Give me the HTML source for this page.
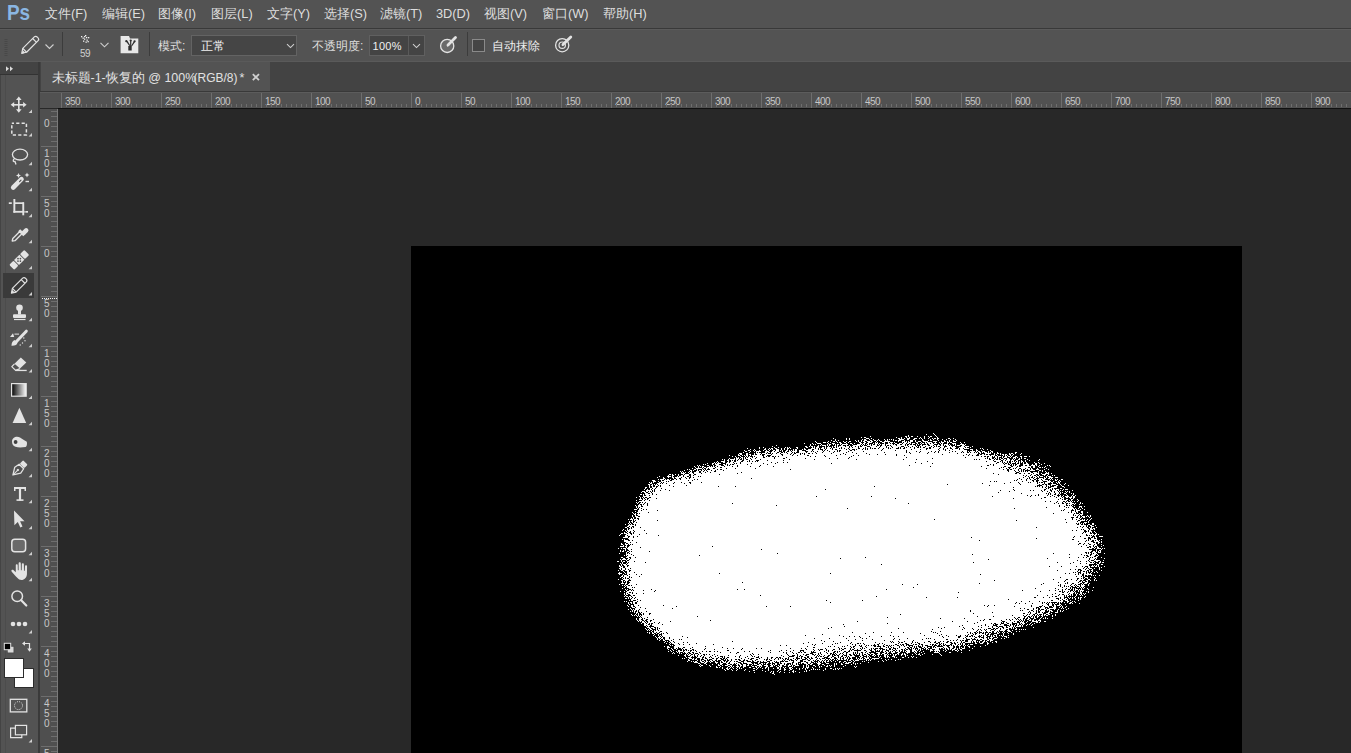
<!DOCTYPE html><html><head><meta charset="utf-8"><style>
*{box-sizing:border-box}
html,body{margin:0;padding:0;width:1351px;height:753px;overflow:hidden;background:#282828;font-family:"Liberation Sans",sans-serif}
.a{position:absolute}
.t{position:absolute;white-space:nowrap;font-size:12px;line-height:14px;color:#dedede}
.r{position:absolute;white-space:nowrap;font-size:10px;line-height:9px;color:#c8c8c8;letter-spacing:-0.5px}
svg{position:absolute;left:0;top:0}
</style></head><body><div class="a" style="left:0px;top:0px;width:1351px;height:28px;background:#535353;"></div><div class="a" style="left:0px;top:28px;width:1351px;height:1px;background:#393939;"></div><div class="a" style="left:0px;top:29px;width:1351px;height:1px;background:#5b5b5b;"></div><div class="a" style="left:0px;top:30px;width:1351px;height:31px;background:#535353;"></div><div class="a" style="left:0px;top:61px;width:1351px;height:1px;background:#5a5a5a;"></div><div class="a" style="left:40px;top:62px;width:1311px;height:29px;background:#434343;"></div><div class="a" style="left:41px;top:62px;width:229px;height:29px;background:#535353;"></div><div class="a" style="left:40px;top:91px;width:1311px;height:1px;background:#393939;"></div><div class="a" style="left:40px;top:92px;width:1311px;height:1px;background:#5c5c5c;"></div><div class="a" style="left:40px;top:93px;width:1311px;height:15px;background:#515151;"></div><div class="a" style="left:58px;top:108px;width:1293px;height:1px;background:#101010;"></div><div class="a" style="left:40px;top:109px;width:17px;height:644px;background:#4f4f4f;"></div><div class="a" style="left:57px;top:109px;width:1px;height:644px;background:#7a7a7a;"></div><div class="a" style="left:0px;top:62px;width:38px;height:12px;background:#434343;"></div><div class="a" style="left:0px;top:74px;width:38px;height:1px;background:#333333;"></div><div class="a" style="left:0px;top:75px;width:38px;height:678px;background:#535353;"></div><div class="a" style="left:0px;top:75px;width:1px;height:678px;background:#444444;"></div><div class="a" style="left:5px;top:75px;width:1px;height:678px;background:#4c4c4c;"></div><div class="a" style="left:38px;top:62px;width:2px;height:691px;background:#3a3a3a;"></div><div class="a" style="left:411px;top:246px;width:831px;height:507px;background:#000000;"></div><div class="a" style="left:3px;top:273px;width:31px;height:25px;background:#3a3a3a;"></div><div class="t" style="left:45px;top:6.5px;font-size:12.8px">文件(F)</div><div class="t" style="left:102px;top:6.5px;font-size:12.8px">编辑(E)</div><div class="t" style="left:158px;top:6.5px;font-size:12.8px">图像(I)</div><div class="t" style="left:211px;top:6.5px;font-size:12.8px">图层(L)</div><div class="t" style="left:267px;top:6.5px;font-size:12.8px">文字(Y)</div><div class="t" style="left:324px;top:6.5px;font-size:12.8px">选择(S)</div><div class="t" style="left:380px;top:6.5px;font-size:12.8px">滤镜(T)</div><div class="t" style="left:436px;top:6.5px;font-size:12.8px">3D(D)</div><div class="t" style="left:484px;top:6.5px;font-size:12.8px">视图(V)</div><div class="t" style="left:542px;top:6.5px;font-size:12.8px">窗口(W)</div><div class="t" style="left:603px;top:6.5px;font-size:12.8px">帮助(H)</div><div class="t" style="left:158px;top:39px">模式:</div><div class="a" style="left:191px;top:35px;width:106px;height:21px;background:#454545;border:1px solid #636363"></div><div class="t" style="left:201px;top:39px;color:#f0f0f0">正常</div><div class="t" style="left:312px;top:39px">不透明度:</div><div class="a" style="left:369px;top:35px;width:56px;height:21px;background:#444444;border:1px solid #606060"></div><div class="a" style="left:408px;top:36px;width:1px;height:19px;background:#5a5a5a;"></div><div class="t" style="left:372.5px;top:38.5px;font-size:11px;color:#f0f0f0;letter-spacing:0.3px">100%</div><div class="a" style="left:472px;top:39px;width:13px;height:13px;background:#454545;border:1px solid #8a8a8a"></div><div class="t" style="left:492px;top:39px;color:#f0f0f0">自动抹除</div><div class="r" style="left:80px;top:49px;font-size:10px;color:#d0d0d0">59</div><div class="a" style="left:62px;top:32px;width:1px;height:24px;background:#3c3c3c;"></div><div class="a" style="left:149px;top:32px;width:1px;height:24px;background:#3c3c3c;"></div><div class="a" style="left:467px;top:32px;width:1px;height:24px;background:#3c3c3c;"></div><div class="t" style="left:51.5px;top:71px;color:#e2e2e2;font-size:12.5px">未标题-1-恢复的 @ 100%</div><div class="t" style="left:193.5px;top:71px;color:#e2e2e2;font-size:12px;letter-spacing:0px">(RGB/8)</div><div class="t" style="left:239.5px;top:71px;color:#e2e2e2;font-size:12.5px">*</div><div class="r" style="left:65px;top:97px">350</div><div class="r" style="left:115px;top:97px">300</div><div class="r" style="left:165px;top:97px">250</div><div class="r" style="left:215px;top:97px">200</div><div class="r" style="left:265px;top:97px">150</div><div class="r" style="left:315px;top:97px">100</div><div class="r" style="left:365px;top:97px">50</div><div class="r" style="left:415px;top:97px">0</div><div class="r" style="left:465px;top:97px">50</div><div class="r" style="left:515px;top:97px">100</div><div class="r" style="left:565px;top:97px">150</div><div class="r" style="left:615px;top:97px">200</div><div class="r" style="left:665px;top:97px">250</div><div class="r" style="left:715px;top:97px">300</div><div class="r" style="left:765px;top:97px">350</div><div class="r" style="left:815px;top:97px">400</div><div class="r" style="left:865px;top:97px">450</div><div class="r" style="left:915px;top:97px">500</div><div class="r" style="left:965px;top:97px">550</div><div class="r" style="left:1015px;top:97px">600</div><div class="r" style="left:1065px;top:97px">650</div><div class="r" style="left:1115px;top:97px">700</div><div class="r" style="left:1165px;top:97px">750</div><div class="r" style="left:1215px;top:97px">800</div><div class="r" style="left:1265px;top:97px">850</div><div class="r" style="left:1315px;top:97px">900</div><div class="r" style="left:44px;top:119px">0</div><div class="r" style="left:44px;top:149px">1</div><div class="r" style="left:44px;top:159px">0</div><div class="r" style="left:44px;top:169px">0</div><div class="r" style="left:44px;top:199px">5</div><div class="r" style="left:44px;top:209px">0</div><div class="r" style="left:44px;top:249px">0</div><div class="r" style="left:44px;top:299px">5</div><div class="r" style="left:44px;top:309px">0</div><div class="r" style="left:44px;top:349px">1</div><div class="r" style="left:44px;top:359px">0</div><div class="r" style="left:44px;top:369px">0</div><div class="r" style="left:44px;top:399px">1</div><div class="r" style="left:44px;top:409px">5</div><div class="r" style="left:44px;top:419px">0</div><div class="r" style="left:44px;top:449px">2</div><div class="r" style="left:44px;top:459px">0</div><div class="r" style="left:44px;top:469px">0</div><div class="r" style="left:44px;top:499px">2</div><div class="r" style="left:44px;top:509px">5</div><div class="r" style="left:44px;top:519px">0</div><div class="r" style="left:44px;top:549px">3</div><div class="r" style="left:44px;top:559px">0</div><div class="r" style="left:44px;top:569px">0</div><div class="r" style="left:44px;top:599px">3</div><div class="r" style="left:44px;top:609px">5</div><div class="r" style="left:44px;top:619px">0</div><div class="r" style="left:44px;top:649px">4</div><div class="r" style="left:44px;top:659px">0</div><div class="r" style="left:44px;top:669px">0</div><div class="r" style="left:44px;top:699px">4</div><div class="r" style="left:44px;top:709px">5</div><div class="r" style="left:44px;top:719px">0</div><div class="r" style="left:44px;top:749px">5</div><div class="a" style="left:7px;top:1px;font:bold 22px/24px 'Liberation Sans',sans-serif;color:#8ab6e2;letter-spacing:0px;transform:scaleX(0.86);transform-origin:0 0">Ps</div><svg width="1351" height="753" viewBox="0 0 1351 753"><path d="M61 93h1v15h-1z M66 104h1v3h-1z M71 104h1v3h-1z M76 104h1v3h-1z M81 104h1v3h-1z M86 104h1v3h-1z M91 104h1v3h-1z M96 104h1v3h-1z M101 104h1v3h-1z M106 104h1v3h-1z M111 93h1v15h-1z M116 104h1v3h-1z M121 104h1v3h-1z M126 104h1v3h-1z M131 104h1v3h-1z M136 104h1v3h-1z M141 104h1v3h-1z M146 104h1v3h-1z M151 104h1v3h-1z M156 104h1v3h-1z M161 93h1v15h-1z M166 104h1v3h-1z M171 104h1v3h-1z M176 104h1v3h-1z M181 104h1v3h-1z M186 104h1v3h-1z M191 104h1v3h-1z M196 104h1v3h-1z M201 104h1v3h-1z M206 104h1v3h-1z M211 93h1v15h-1z M216 104h1v3h-1z M221 104h1v3h-1z M226 104h1v3h-1z M231 104h1v3h-1z M236 104h1v3h-1z M241 104h1v3h-1z M246 104h1v3h-1z M251 104h1v3h-1z M256 104h1v3h-1z M261 93h1v15h-1z M266 104h1v3h-1z M271 104h1v3h-1z M276 104h1v3h-1z M281 104h1v3h-1z M286 104h1v3h-1z M291 104h1v3h-1z M296 104h1v3h-1z M301 104h1v3h-1z M306 104h1v3h-1z M311 93h1v15h-1z M316 104h1v3h-1z M321 104h1v3h-1z M326 104h1v3h-1z M331 104h1v3h-1z M336 104h1v3h-1z M341 104h1v3h-1z M346 104h1v3h-1z M351 104h1v3h-1z M356 104h1v3h-1z M361 93h1v15h-1z M366 104h1v3h-1z M371 104h1v3h-1z M376 104h1v3h-1z M381 104h1v3h-1z M386 104h1v3h-1z M391 104h1v3h-1z M396 104h1v3h-1z M401 104h1v3h-1z M406 104h1v3h-1z M411 93h1v15h-1z M416 104h1v3h-1z M421 104h1v3h-1z M426 104h1v3h-1z M431 104h1v3h-1z M436 104h1v3h-1z M441 104h1v3h-1z M446 104h1v3h-1z M451 104h1v3h-1z M456 104h1v3h-1z M461 93h1v15h-1z M466 104h1v3h-1z M471 104h1v3h-1z M476 104h1v3h-1z M481 104h1v3h-1z M486 104h1v3h-1z M491 104h1v3h-1z M496 104h1v3h-1z M501 104h1v3h-1z M506 104h1v3h-1z M511 93h1v15h-1z M516 104h1v3h-1z M521 104h1v3h-1z M526 104h1v3h-1z M531 104h1v3h-1z M536 104h1v3h-1z M541 104h1v3h-1z M546 104h1v3h-1z M551 104h1v3h-1z M556 104h1v3h-1z M561 93h1v15h-1z M566 104h1v3h-1z M571 104h1v3h-1z M576 104h1v3h-1z M581 104h1v3h-1z M586 104h1v3h-1z M591 104h1v3h-1z M596 104h1v3h-1z M601 104h1v3h-1z M606 104h1v3h-1z M611 93h1v15h-1z M616 104h1v3h-1z M621 104h1v3h-1z M626 104h1v3h-1z M631 104h1v3h-1z M636 104h1v3h-1z M641 104h1v3h-1z M646 104h1v3h-1z M651 104h1v3h-1z M656 104h1v3h-1z M661 93h1v15h-1z M666 104h1v3h-1z M671 104h1v3h-1z M676 104h1v3h-1z M681 104h1v3h-1z M686 104h1v3h-1z M691 104h1v3h-1z M696 104h1v3h-1z M701 104h1v3h-1z M706 104h1v3h-1z M711 93h1v15h-1z M716 104h1v3h-1z M721 104h1v3h-1z M726 104h1v3h-1z M731 104h1v3h-1z M736 104h1v3h-1z M741 104h1v3h-1z M746 104h1v3h-1z M751 104h1v3h-1z M756 104h1v3h-1z M761 93h1v15h-1z M766 104h1v3h-1z M771 104h1v3h-1z M776 104h1v3h-1z M781 104h1v3h-1z M786 104h1v3h-1z M791 104h1v3h-1z M796 104h1v3h-1z M801 104h1v3h-1z M806 104h1v3h-1z M811 93h1v15h-1z M816 104h1v3h-1z M821 104h1v3h-1z M826 104h1v3h-1z M831 104h1v3h-1z M836 104h1v3h-1z M841 104h1v3h-1z M846 104h1v3h-1z M851 104h1v3h-1z M856 104h1v3h-1z M861 93h1v15h-1z M866 104h1v3h-1z M871 104h1v3h-1z M876 104h1v3h-1z M881 104h1v3h-1z M886 104h1v3h-1z M891 104h1v3h-1z M896 104h1v3h-1z M901 104h1v3h-1z M906 104h1v3h-1z M911 93h1v15h-1z M916 104h1v3h-1z M921 104h1v3h-1z M926 104h1v3h-1z M931 104h1v3h-1z M936 104h1v3h-1z M941 104h1v3h-1z M946 104h1v3h-1z M951 104h1v3h-1z M956 104h1v3h-1z M961 93h1v15h-1z M966 104h1v3h-1z M971 104h1v3h-1z M976 104h1v3h-1z M981 104h1v3h-1z M986 104h1v3h-1z M991 104h1v3h-1z M996 104h1v3h-1z M1001 104h1v3h-1z M1006 104h1v3h-1z M1011 93h1v15h-1z M1016 104h1v3h-1z M1021 104h1v3h-1z M1026 104h1v3h-1z M1031 104h1v3h-1z M1036 104h1v3h-1z M1041 104h1v3h-1z M1046 104h1v3h-1z M1051 104h1v3h-1z M1056 104h1v3h-1z M1061 93h1v15h-1z M1066 104h1v3h-1z M1071 104h1v3h-1z M1076 104h1v3h-1z M1081 104h1v3h-1z M1086 104h1v3h-1z M1091 104h1v3h-1z M1096 104h1v3h-1z M1101 104h1v3h-1z M1106 104h1v3h-1z M1111 93h1v15h-1z M1116 104h1v3h-1z M1121 104h1v3h-1z M1126 104h1v3h-1z M1131 104h1v3h-1z M1136 104h1v3h-1z M1141 104h1v3h-1z M1146 104h1v3h-1z M1151 104h1v3h-1z M1156 104h1v3h-1z M1161 93h1v15h-1z M1166 104h1v3h-1z M1171 104h1v3h-1z M1176 104h1v3h-1z M1181 104h1v3h-1z M1186 104h1v3h-1z M1191 104h1v3h-1z M1196 104h1v3h-1z M1201 104h1v3h-1z M1206 104h1v3h-1z M1211 93h1v15h-1z M1216 104h1v3h-1z M1221 104h1v3h-1z M1226 104h1v3h-1z M1231 104h1v3h-1z M1236 104h1v3h-1z M1241 104h1v3h-1z M1246 104h1v3h-1z M1251 104h1v3h-1z M1256 104h1v3h-1z M1261 93h1v15h-1z M1266 104h1v3h-1z M1271 104h1v3h-1z M1276 104h1v3h-1z M1281 104h1v3h-1z M1286 104h1v3h-1z M1291 104h1v3h-1z M1296 104h1v3h-1z M1301 104h1v3h-1z M1306 104h1v3h-1z M1311 93h1v15h-1z M1316 104h1v3h-1z M1321 104h1v3h-1z M1326 104h1v3h-1z M1331 104h1v3h-1z M1336 104h1v3h-1z M1341 104h1v3h-1z M1346 104h1v3h-1z M51 111h6v1h-6z M51 116h6v1h-6z M51 121h6v1h-6z M51 126h6v1h-6z M51 131h6v1h-6z M51 136h6v1h-6z M51 141h6v1h-6z M41 146h16v1h-16z M51 151h6v1h-6z M51 156h6v1h-6z M51 161h6v1h-6z M51 166h6v1h-6z M51 171h6v1h-6z M51 176h6v1h-6z M51 181h6v1h-6z M51 186h6v1h-6z M51 191h6v1h-6z M41 196h16v1h-16z M51 201h6v1h-6z M51 206h6v1h-6z M51 211h6v1h-6z M51 216h6v1h-6z M51 221h6v1h-6z M51 226h6v1h-6z M51 231h6v1h-6z M51 236h6v1h-6z M51 241h6v1h-6z M41 246h16v1h-16z M51 251h6v1h-6z M51 256h6v1h-6z M51 261h6v1h-6z M51 266h6v1h-6z M51 271h6v1h-6z M51 276h6v1h-6z M51 281h6v1h-6z M51 286h6v1h-6z M51 291h6v1h-6z M41 296h16v1h-16z M51 301h6v1h-6z M51 306h6v1h-6z M51 311h6v1h-6z M51 316h6v1h-6z M51 321h6v1h-6z M51 326h6v1h-6z M51 331h6v1h-6z M51 336h6v1h-6z M51 341h6v1h-6z M41 346h16v1h-16z M51 351h6v1h-6z M51 356h6v1h-6z M51 361h6v1h-6z M51 366h6v1h-6z M51 371h6v1h-6z M51 376h6v1h-6z M51 381h6v1h-6z M51 386h6v1h-6z M51 391h6v1h-6z M41 396h16v1h-16z M51 401h6v1h-6z M51 406h6v1h-6z M51 411h6v1h-6z M51 416h6v1h-6z M51 421h6v1h-6z M51 426h6v1h-6z M51 431h6v1h-6z M51 436h6v1h-6z M51 441h6v1h-6z M41 446h16v1h-16z M51 451h6v1h-6z M51 456h6v1h-6z M51 461h6v1h-6z M51 466h6v1h-6z M51 471h6v1h-6z M51 476h6v1h-6z M51 481h6v1h-6z M51 486h6v1h-6z M51 491h6v1h-6z M41 496h16v1h-16z M51 501h6v1h-6z M51 506h6v1h-6z M51 511h6v1h-6z M51 516h6v1h-6z M51 521h6v1h-6z M51 526h6v1h-6z M51 531h6v1h-6z M51 536h6v1h-6z M51 541h6v1h-6z M41 546h16v1h-16z M51 551h6v1h-6z M51 556h6v1h-6z M51 561h6v1h-6z M51 566h6v1h-6z M51 571h6v1h-6z M51 576h6v1h-6z M51 581h6v1h-6z M51 586h6v1h-6z M51 591h6v1h-6z M41 596h16v1h-16z M51 601h6v1h-6z M51 606h6v1h-6z M51 611h6v1h-6z M51 616h6v1h-6z M51 621h6v1h-6z M51 626h6v1h-6z M51 631h6v1h-6z M51 636h6v1h-6z M51 641h6v1h-6z M41 646h16v1h-16z M51 651h6v1h-6z M51 656h6v1h-6z M51 661h6v1h-6z M51 666h6v1h-6z M51 671h6v1h-6z M51 676h6v1h-6z M51 681h6v1h-6z M51 686h6v1h-6z M51 691h6v1h-6z M41 696h16v1h-16z M51 701h6v1h-6z M51 706h6v1h-6z M51 711h6v1h-6z M51 716h6v1h-6z M51 721h6v1h-6z M51 726h6v1h-6z M51 731h6v1h-6z M51 736h6v1h-6z M51 741h6v1h-6z M41 746h16v1h-16z M51 751h6v1h-6z M41 796h16v1h-16z" fill="#6e6e6e"/><g fill="#e3e3e3" stroke="none"><rect x="18" y="99" width="1.6" height="11"/><rect x="13" y="104" width="11" height="1.6"/><path d="M18.8 96.5 L21.6 100 L16 100Z"/><path d="M18.8 112.8 L21.6 109.3 L16 109.3Z"/><path d="M10.7 104.8 L14.2 102 L14.2 107.6Z"/><path d="M26.6 104.8 L23.1 102 L23.1 107.6Z"/></g><rect x="11.8" y="123.2" width="14.6" height="11.8" fill="none" stroke="#e3e3e3" stroke-width="1.5" stroke-dasharray="3.2 2.2" stroke-dashoffset="1"/><ellipse cx="20" cy="154.6" rx="7.6" ry="5.4" fill="none" stroke="#e3e3e3" stroke-width="1.3"/><path d="M14.5 158.5 C12.5 160 13 162 15 161.5 L16 164.5" fill="none" stroke="#e3e3e3" stroke-width="1.3"/><path d="M13.2 187.5 L21.5 179.2" stroke="#e3e3e3" stroke-width="4.6" stroke-linecap="round"/><path d="M19.6 181.6 L21 180.2" stroke="#535353" stroke-width="1.2" stroke-linecap="round"/><g fill="#e3e3e3"><path d="M18.5 173 L19.3 174.8 L21 175.5 L19.3 176.2 L18.5 178 L17.7 176.2 L16 175.5 L17.7 174.8Z"/><path d="M27 172.5 L27.8 174.3 L29.5 175 L27.8 175.7 L27 177.5 L26.2 175.7 L24.5 175 L26.2 174.3Z"/><rect x="25.5" y="180.8" width="3.5" height="1.4"/></g><g fill="#e3e3e3"><rect x="13.4" y="199" width="1.9" height="13.7"/><rect x="8.8" y="202.3" width="3" height="1.7"/><rect x="15" y="202.3" width="9" height="1.7"/><rect x="13.4" y="210.9" width="11.2" height="1.8"/><rect x="22.3" y="202.3" width="1.9" height="13"/><rect x="25.3" y="211" width="2.7" height="1.7"/></g><g fill="none" stroke="#e3e3e3" stroke-width="1.3" stroke-linejoin="round"><path d="M12.2 241 L12.8 238.5 L20 231.3 L22.2 233.5 L15 240.7 Z"/></g><g fill="#e3e3e3"><path d="M18.2 231.2 L20.2 229.2 L25.3 234.3 L23.3 236.3Z"/><path d="M21.5 231.8 L24.6 228.7 A2.2 2.2 0 0 1 27.8 231.9 L24.7 235Z"/></g><g transform="translate(19.2 259.9) rotate(-45)"><rect x="-10.6" y="-3.5" width="6" height="7" rx="1.2" fill="#e3e3e3"/><rect x="4.6" y="-3.5" width="6" height="7" rx="1.2" fill="#e3e3e3"/><rect x="-3.8" y="-3.5" width="7.6" height="7" fill="#e3e3e3"/><g fill="#535353"><circle cx="-1.7" cy="0" r="0.85"/><circle cx="1.7" cy="0" r="0.85"/><circle cx="0" cy="-1.7" r="0.85"/><circle cx="0" cy="1.7" r="0.85"/></g></g><g transform="translate(18.5 286) rotate(-45)" fill="none" stroke="#e3e3e3" stroke-width="1.2" stroke-linejoin="round"><path d="M-10 0 L-6 -2.6 L8.5 -2.6 Q10.5 -2.6 10.5 0 Q10.5 2.6 8.5 2.6 L-6 2.6 Z"/><path d="M-6 -2.6 L-6 2.6"/><path d="M6.5 -2.6 L6.5 2.6"/></g><path d="M11.2 293.3 L12.3 290 L14.5 292.2Z" fill="#e3e3e3"/><g fill="#e3e3e3"><circle cx="19.5" cy="307.8" r="3.3"/><rect x="18" y="309.5" width="3" height="5"/><rect x="13" y="314.3" width="13" height="3.8" rx="1"/><rect x="14" y="318.9" width="11.5" height="1.2"/></g><path d="M16.5 341.5 L26.3 331.2" stroke="#e3e3e3" stroke-width="3" stroke-linecap="round"/><path d="M11.5 345.8 Q11.5 341 14.8 340 L17.5 342.5 Q17 346 11.5 345.8Z" fill="#e3e3e3"/><g fill="#e3e3e3"><path d="M10 337 L13 333.2 L14.2 337Z"/><rect x="14.5" y="333.6" width="4.5" height="1"/><circle cx="23.8" cy="338" r="0.7"/><circle cx="25" cy="340.8" r="0.7"/><circle cx="22.5" cy="343" r="0.7"/><circle cx="20.2" cy="345" r="0.7"/></g><path d="M20.8 357.6 L26.3 362.4 L20 368.6 L14.5 363.8Z" fill="#e3e3e3"/><path d="M14.5 363.8 L11.8 366.6 L15.6 370.4 L20 368.6" fill="none" stroke="#e3e3e3" stroke-width="1.2" stroke-linejoin="round"/><rect x="15.5" y="369.8" width="11.2" height="1.3" fill="#e3e3e3"/><defs><linearGradient id="gr" x1="0" x2="1" y1="0" y2="0"><stop offset="0" stop-color="#000"/><stop offset="1" stop-color="#fff"/></linearGradient></defs><rect x="11.6" y="383.6" width="14.6" height="12.6" fill="url(#gr)" stroke="#e3e3e3" stroke-width="1.2"/><path d="M19.4 407.8 L26.2 423 L12.6 423Z" fill="#e3e3e3"/><path d="M12 441.5 C12 437 17 435.5 20 437.5 C22 438.8 24 440 26.5 441.5 C27.5 442.5 27 446.8 25.5 447 C22 447.5 18 447.6 15.5 446.8 C13 446 12 444 12 441.5Z" fill="#e3e3e3"/><circle cx="15.6" cy="442" r="1.9" fill="#404040"/><g transform="translate(19.3 468.6) rotate(-135)"><path d="M0 -9 L4.2 -2.2 L3.2 3 L-3.2 3 L-4.2 -2.2Z" fill="none" stroke="#e3e3e3" stroke-width="1.3" stroke-linejoin="round"/><rect x="-3.2" y="3.8" width="6.4" height="4.8" rx="1" fill="#e3e3e3"/><path d="M0 -8.5 L0 -2.5" stroke="#e3e3e3" stroke-width="1"/><circle cx="0" cy="-2" r="1.2" fill="#e3e3e3"/></g><g fill="#e3e3e3"><rect x="14" y="487" width="12" height="2"/><rect x="14" y="487" width="1.5" height="4"/><rect x="24.5" y="487" width="1.5" height="4"/><rect x="18.9" y="487" width="2.2" height="13.5"/><rect x="16.5" y="499.3" width="7" height="1.6"/></g><path d="M14 510.5 L14.4 525.3 L17.8 522 L20.3 527.5 L22.5 526.5 L20.1 521.2 L24.5 521.2Z" fill="#e3e3e3"/><rect x="11.8" y="539.3" width="13.8" height="12.4" rx="3" fill="#6a6a6a" stroke="#e3e3e3" stroke-width="1.5"/><path transform="translate(19.2 571) scale(1.14 1) translate(-17.5 -571)" d="M16 578 C13.5 575 11.5 572.5 10.7 571.2 C10.2 570.2 11.5 569.3 12.4 570 L14.5 572.3 L14.5 565.2 C14.5 564 16.2 564 16.2 565.2 L16.3 570.3 L17 570.3 L17 563.4 C17 562 18.9 562 18.9 563.4 L19 570.3 L19.7 570.3 L19.8 564.2 C19.8 562.9 21.6 562.9 21.6 564.2 L21.7 570.8 L22.4 570.8 L22.6 566.3 C22.6 565 24.4 565 24.4 566.3 L24.3 574 C24.2 577.5 22 580 19.5 580 C18 580 16.8 579 16 578Z" fill="#e3e3e3"/><circle cx="17.2" cy="596.2" r="5.3" fill="none" stroke="#e3e3e3" stroke-width="1.5"/><path d="M21.2 600.2 L26.3 605.5" stroke="#e3e3e3" stroke-width="2.2" stroke-linecap="round"/><g fill="#e3e3e3"><circle cx="13" cy="624" r="2.3"/><circle cx="19" cy="624" r="2.3"/><circle cx="25" cy="624" r="2.3"/></g><rect x="7.3" y="646.3" width="6.6" height="6.6" fill="#d8d8d8" stroke="#444" stroke-width="0.6"/><rect x="4.3" y="643.3" width="6.4" height="6.4" fill="#000" stroke="#e0e0e0" stroke-width="1"/><g fill="none" stroke="#e3e3e3" stroke-width="1.2"><path d="M24.5 643.5 L29.5 643.5 L29.5 649"/></g><g fill="#e3e3e3"><path d="M22 643.5 L25 641.2 L25 645.8Z"/><path d="M29.5 651.8 L27.2 648.6 L31.8 648.6Z"/></g><rect x="14.5" y="668.5" width="19" height="19" fill="#fff" stroke="#2c2c2c" stroke-width="1"/><rect x="4.5" y="658.5" width="19" height="19" fill="#fff" stroke="#2c2c2c" stroke-width="1"/><rect x="10.3" y="699.3" width="16.5" height="12.6" fill="none" stroke="#e3e3e3" stroke-width="1.3"/><circle cx="18.5" cy="705.6" r="4" fill="none" stroke="#e3e3e3" stroke-width="1" stroke-dasharray="1 1.1"/><rect x="15.4" y="725.4" width="11.2" height="9.4" fill="#535353" stroke="#e3e3e3" stroke-width="1.2"/><path d="M15.4 728.2 L10.6 728.2 L10.6 737.6 L21.8 737.6 L21.8 734.8" fill="none" stroke="#e3e3e3" stroke-width="1.2"/><path d="M32 109.5 L32 112.9 L28.6 112.9Z" fill="#cfcfcf"/><path d="M32 133 L32 136.4 L28.6 136.4Z" fill="#cfcfcf"/><path d="M32 161.8 L32 165.20000000000002 L28.6 165.20000000000002Z" fill="#cfcfcf"/><path d="M32 187.8 L32 191.20000000000002 L28.6 191.20000000000002Z" fill="#cfcfcf"/><path d="M32 213.8 L32 217.20000000000002 L28.6 217.20000000000002Z" fill="#cfcfcf"/><path d="M32 239.8 L32 243.20000000000002 L28.6 243.20000000000002Z" fill="#cfcfcf"/><path d="M32 265.8 L32 269.2 L28.6 269.2Z" fill="#cfcfcf"/><path d="M32 292 L32 295.4 L28.6 295.4Z" fill="#cfcfcf"/><path d="M32 317.8 L32 321.2 L28.6 321.2Z" fill="#cfcfcf"/><path d="M32 343.8 L32 347.2 L28.6 347.2Z" fill="#cfcfcf"/><path d="M32 369 L32 372.4 L28.6 372.4Z" fill="#cfcfcf"/><path d="M32 395.5 L32 398.9 L28.6 398.9Z" fill="#cfcfcf"/><path d="M32 421.8 L32 425.2 L28.6 425.2Z" fill="#cfcfcf"/><path d="M32 447.8 L32 451.2 L28.6 451.2Z" fill="#cfcfcf"/><path d="M32 473.8 L32 477.2 L28.6 477.2Z" fill="#cfcfcf"/><path d="M32 499.8 L32 503.2 L28.6 503.2Z" fill="#cfcfcf"/><path d="M32 525.8 L32 529.1999999999999 L28.6 529.1999999999999Z" fill="#cfcfcf"/><path d="M32 551.8 L32 555.1999999999999 L28.6 555.1999999999999Z" fill="#cfcfcf"/><path d="M32 577.8 L32 581.1999999999999 L28.6 581.1999999999999Z" fill="#cfcfcf"/><path d="M32 630 L32 633.4 L28.6 633.4Z" fill="#cfcfcf"/><path d="M32 739 L32 742.4 L28.6 742.4Z" fill="#cfcfcf"/><g fill="#dcdcdc"><path d="M6 66.2 L9 68.7 L6 71.2Z"/><path d="M10 66.2 L13 68.7 L10 71.2Z"/></g><g fill="#484848"><rect x="4.5" y="39" width="3" height="1"/><rect x="4.5" y="41" width="3" height="1"/><rect x="4.5" y="43" width="3" height="1"/><rect x="4.5" y="45" width="3" height="1"/><rect x="4.5" y="47" width="3" height="1"/><rect x="4.5" y="49" width="3" height="1"/><rect x="4.5" y="51" width="3" height="1"/><rect x="4.5" y="53" width="3" height="1"/><rect x="4.5" y="55" width="3" height="1"/></g><g transform="translate(29.5 45.5) rotate(-45)" fill="none" stroke="#e3e3e3" stroke-width="1.2" stroke-linejoin="round"><path d="M-11 0 L-6.8 -2.7 L9.5 -2.7 Q11.5 -2.7 11.5 0 Q11.5 2.7 9.5 2.7 L-6.8 2.7 Z"/><path d="M-6.8 -2.7 L-6.8 2.7"/><path d="M7.2 -2.7 L7.2 2.7"/></g><path d="M21.6 54 L22.8 50.3 L25.3 52.8Z" fill="#e3e3e3"/><path d="M45.5 44.5 L49.5 48.5 L53.5 44.5" fill="none" stroke="#cfcfcf" stroke-width="1.1"/><path d="M100.5 42.8 L104.5 46.8 L108.5 42.8" fill="none" stroke="#cfcfcf" stroke-width="1.1"/><path d="M287.0 44.05 L290.5 47.55 L294.0 44.05" fill="none" stroke="#cfcfcf" stroke-width="1.1"/><path d="M413.0 44.05 L416.5 47.55 L420.0 44.05" fill="none" stroke="#cfcfcf" stroke-width="1.1"/><g fill="#f0f0f0"><rect x="81" y="36" width="1.3" height="1.3"/><rect x="82.5" y="37.5" width="1.3" height="1.3"/><rect x="85" y="35" width="1.3" height="1.3"/><rect x="86" y="37" width="1.3" height="1.3"/><rect x="84" y="38.5" width="1.3" height="1.3"/><rect x="88" y="37" width="1.3" height="1.3"/><rect x="86.5" y="39.5" width="1.3" height="1.3"/><rect x="83" y="40.5" width="1.3" height="1.3"/><rect x="85.5" y="41.5" width="1.3" height="1.3"/><rect x="87.5" y="41" width="1.3" height="1.3"/><rect x="84" y="36" width="1.3" height="1.3"/></g><path d="M120.6 36 L129 36 L130 38.5 L138.3 38.5 L138.3 53.3 L120.6 53.3Z" fill="#e8e8e8"/><g fill="#2e2e2e"><rect x="128.3" y="46" width="3.4" height="4.5"/><path d="M129.3 46 L126 41.3 L127.4 40.8 L130.3 45.5Z"/><path d="M130.1 46 L130.1 40.5 L131.3 40.5 L131.3 46Z"/><path d="M131 46 L134 41 L135.2 41.7 L132 46.3Z"/><circle cx="126.3" cy="41.2" r="1.1"/><circle cx="130.7" cy="40.5" r="1.1"/><circle cx="134.6" cy="41.3" r="1.1"/></g><circle cx="447.2" cy="45.9" r="6.6" fill="#6a6a6a" stroke="#e3e3e3" stroke-width="1.3"/><path d="M448 45 L455.5 37.5" stroke="#e3e3e3" stroke-width="2.8" stroke-linecap="round"/><path d="M447 46.2 L449 44.8" stroke="#e3e3e3" stroke-width="1.2"/><circle cx="562.2" cy="45.2" r="6.6" fill="none" stroke="#e3e3e3" stroke-width="1.3"/><circle cx="562.2" cy="45.2" r="3.2" fill="none" stroke="#e3e3e3" stroke-width="1.2"/><path d="M563 44.5 L570.8 37" stroke="#e3e3e3" stroke-width="2.8" stroke-linecap="round"/><path d="M562 45.7 L564 44" stroke="#e3e3e3" stroke-width="1.2"/><g fill="#f2f2f2"><rect x="42" y="298" width="1" height="1"/><rect x="44" y="298" width="1" height="1"/><rect x="46" y="298" width="1" height="1"/><rect x="48" y="298" width="1" height="1"/><rect x="50" y="298" width="1" height="1"/><rect x="52" y="298" width="1" height="1"/><rect x="54" y="298" width="1" height="1"/><rect x="56" y="298" width="1" height="1"/></g><g stroke="#d0d0d0" stroke-width="1.8"><path d="M252.8 74.2 L259 80.2"/><path d="M259 74.2 L252.8 80.2"/></g><path fill="#fff" d="M933 433h1v1h-1zM926 434h1v1h-1zM934 434h1v1h-1zM908 435h1v1h-1zM935 435h1v1h-1zM870 436h1v1h-1zM905 436h2v1h-2zM908 436h1v1h-1zM911 436h2v1h-2zM917 436h1v1h-1zM924 436h1v1h-1zM928 436h1v1h-1zM930 436h2v1h-2zM936 436h1v1h-1zM861 437h1v1h-1zM864 437h2v1h-2zM896 437h1v1h-1zM901 437h1v1h-1zM906 437h1v1h-1zM909 437h1v1h-1zM920 437h1v1h-1zM924 437h1v1h-1zM929 437h1v1h-1zM937 437h1v1h-1zM833 438h1v1h-1zM846 438h1v1h-1zM849 438h1v1h-1zM866 438h3v1h-3zM871 438h1v1h-1zM898 438h2v1h-2zM901 438h1v1h-1zM904 438h1v1h-1zM907 438h3v1h-3zM914 438h3v1h-3zM919 438h1v1h-1zM921 438h1v1h-1zM924 438h1v1h-1zM928 438h1v1h-1zM932 438h1v1h-1zM934 438h2v1h-2zM937 438h2v1h-2zM948 438h2v1h-2zM953 438h1v1h-1zM835 439h1v1h-1zM846 439h1v1h-1zM849 439h1v1h-1zM862 439h1v1h-1zM864 439h2v1h-2zM869 439h1v1h-1zM873 439h1v1h-1zM878 439h1v1h-1zM884 439h1v1h-1zM887 439h1v1h-1zM889 439h1v1h-1zM891 439h1v1h-1zM893 439h1v1h-1zM899 439h5v1h-5zM907 439h2v1h-2zM913 439h2v1h-2zM922 439h1v1h-1zM930 439h1v1h-1zM933 439h1v1h-1zM937 439h1v1h-1zM942 439h1v1h-1zM946 439h1v1h-1zM950 439h1v1h-1zM955 439h1v1h-1zM831 440h1v1h-1zM835 440h1v1h-1zM838 440h1v1h-1zM855 440h1v1h-1zM858 440h1v1h-1zM861 440h1v1h-1zM864 440h3v1h-3zM870 440h2v1h-2zM874 440h2v1h-2zM877 440h1v1h-1zM879 440h1v1h-1zM885 440h1v1h-1zM887 440h1v1h-1zM893 440h1v1h-1zM895 440h2v1h-2zM898 440h3v1h-3zM904 440h1v1h-1zM910 440h3v1h-3zM915 440h1v1h-1zM922 440h2v1h-2zM928 440h1v1h-1zM930 440h2v1h-2zM938 440h1v1h-1zM944 440h1v1h-1zM949 440h1v1h-1zM953 440h1v1h-1zM956 440h1v1h-1zM815 441h1v1h-1zM828 441h1v1h-1zM833 441h2v1h-2zM836 441h1v1h-1zM843 441h1v1h-1zM846 441h1v1h-1zM849 441h2v1h-2zM856 441h1v1h-1zM858 441h1v1h-1zM861 441h1v1h-1zM863 441h2v1h-2zM867 441h3v1h-3zM871 441h2v1h-2zM876 441h1v1h-1zM880 441h2v1h-2zM884 441h6v1h-6zM898 441h1v1h-1zM902 441h3v1h-3zM906 441h1v1h-1zM908 441h1v1h-1zM910 441h3v1h-3zM915 441h1v1h-1zM918 441h3v1h-3zM923 441h5v1h-5zM933 441h4v1h-4zM941 441h1v1h-1zM944 441h2v1h-2zM947 441h1v1h-1zM949 441h1v1h-1zM953 441h3v1h-3zM816 442h1v1h-1zM823 442h3v1h-3zM827 442h1v1h-1zM830 442h1v1h-1zM837 442h1v1h-1zM839 442h2v1h-2zM844 442h2v1h-2zM848 442h1v1h-1zM859 442h2v1h-2zM864 442h2v1h-2zM868 442h4v1h-4zM875 442h1v1h-1zM877 442h1v1h-1zM882 442h3v1h-3zM888 442h1v1h-1zM890 442h3v1h-3zM894 442h1v1h-1zM902 442h1v1h-1zM904 442h3v1h-3zM908 442h3v1h-3zM916 442h2v1h-2zM921 442h1v1h-1zM925 442h1v1h-1zM927 442h5v1h-5zM935 442h1v1h-1zM939 442h1v1h-1zM941 442h3v1h-3zM947 442h2v1h-2zM950 442h2v1h-2zM960 442h1v1h-1zM964 442h1v1h-1zM804 443h1v1h-1zM812 443h1v1h-1zM817 443h4v1h-4zM828 443h1v1h-1zM832 443h3v1h-3zM840 443h2v1h-2zM846 443h1v1h-1zM850 443h2v1h-2zM854 443h1v1h-1zM860 443h2v1h-2zM863 443h2v1h-2zM867 443h2v1h-2zM873 443h1v1h-1zM875 443h3v1h-3zM879 443h1v1h-1zM884 443h1v1h-1zM888 443h2v1h-2zM891 443h1v1h-1zM895 443h2v1h-2zM899 443h3v1h-3zM903 443h3v1h-3zM907 443h2v1h-2zM910 443h1v1h-1zM912 443h3v1h-3zM917 443h1v1h-1zM920 443h1v1h-1zM922 443h2v1h-2zM925 443h2v1h-2zM928 443h2v1h-2zM931 443h2v1h-2zM934 443h3v1h-3zM940 443h1v1h-1zM942 443h1v1h-1zM947 443h1v1h-1zM952 443h4v1h-4zM961 443h1v1h-1zM810 444h1v1h-1zM813 444h1v1h-1zM815 444h1v1h-1zM821 444h1v1h-1zM827 444h1v1h-1zM829 444h2v1h-2zM833 444h1v1h-1zM835 444h1v1h-1zM837 444h2v1h-2zM840 444h1v1h-1zM842 444h6v1h-6zM852 444h1v1h-1zM857 444h4v1h-4zM862 444h1v1h-1zM864 444h1v1h-1zM866 444h1v1h-1zM868 444h1v1h-1zM870 444h1v1h-1zM872 444h1v1h-1zM875 444h2v1h-2zM878 444h1v1h-1zM880 444h1v1h-1zM882 444h3v1h-3zM886 444h7v1h-7zM894 444h1v1h-1zM897 444h3v1h-3zM902 444h3v1h-3zM906 444h1v1h-1zM909 444h1v1h-1zM912 444h1v1h-1zM916 444h1v1h-1zM918 444h1v1h-1zM921 444h1v1h-1zM926 444h1v1h-1zM929 444h5v1h-5zM938 444h1v1h-1zM941 444h2v1h-2zM944 444h4v1h-4zM949 444h1v1h-1zM953 444h1v1h-1zM955 444h1v1h-1zM960 444h4v1h-4zM965 444h1v1h-1zM776 445h1v1h-1zM810 445h1v1h-1zM818 445h1v1h-1zM820 445h1v1h-1zM822 445h4v1h-4zM827 445h1v1h-1zM829 445h1v1h-1zM835 445h1v1h-1zM837 445h1v1h-1zM841 445h2v1h-2zM846 445h1v1h-1zM849 445h1v1h-1zM853 445h7v1h-7zM861 445h1v1h-1zM863 445h1v1h-1zM867 445h4v1h-4zM872 445h5v1h-5zM879 445h1v1h-1zM882 445h3v1h-3zM886 445h1v1h-1zM889 445h1v1h-1zM891 445h5v1h-5zM897 445h8v1h-8zM906 445h1v1h-1zM908 445h7v1h-7zM916 445h1v1h-1zM920 445h2v1h-2zM923 445h5v1h-5zM930 445h3v1h-3zM934 445h2v1h-2zM937 445h3v1h-3zM941 445h2v1h-2zM944 445h1v1h-1zM946 445h3v1h-3zM950 445h1v1h-1zM955 445h1v1h-1zM957 445h3v1h-3zM962 445h3v1h-3zM772 446h1v1h-1zM805 446h2v1h-2zM809 446h1v1h-1zM811 446h2v1h-2zM814 446h1v1h-1zM817 446h2v1h-2zM825 446h1v1h-1zM828 446h1v1h-1zM832 446h1v1h-1zM834 446h2v1h-2zM837 446h1v1h-1zM839 446h6v1h-6zM846 446h3v1h-3zM850 446h1v1h-1zM852 446h3v1h-3zM856 446h2v1h-2zM859 446h1v1h-1zM862 446h5v1h-5zM870 446h6v1h-6zM877 446h3v1h-3zM881 446h5v1h-5zM887 446h4v1h-4zM892 446h9v1h-9zM904 446h4v1h-4zM909 446h3v1h-3zM913 446h3v1h-3zM917 446h1v1h-1zM919 446h1v1h-1zM921 446h4v1h-4zM926 446h5v1h-5zM932 446h2v1h-2zM935 446h1v1h-1zM937 446h1v1h-1zM940 446h4v1h-4zM947 446h5v1h-5zM953 446h2v1h-2zM961 446h3v1h-3zM965 446h4v1h-4zM972 446h1v1h-1zM759 447h1v1h-1zM763 447h1v1h-1zM774 447h1v1h-1zM778 447h1v1h-1zM785 447h1v1h-1zM787 447h1v1h-1zM789 447h1v1h-1zM796 447h2v1h-2zM806 447h2v1h-2zM812 447h1v1h-1zM814 447h1v1h-1zM816 447h3v1h-3zM822 447h2v1h-2zM825 447h1v1h-1zM827 447h4v1h-4zM832 447h1v1h-1zM835 447h1v1h-1zM837 447h4v1h-4zM842 447h7v1h-7zM850 447h2v1h-2zM853 447h5v1h-5zM859 447h6v1h-6zM866 447h4v1h-4zM871 447h8v1h-8zM880 447h6v1h-6zM887 447h1v1h-1zM889 447h3v1h-3zM893 447h5v1h-5zM899 447h1v1h-1zM901 447h3v1h-3zM905 447h1v1h-1zM907 447h3v1h-3zM911 447h3v1h-3zM915 447h2v1h-2zM919 447h1v1h-1zM921 447h2v1h-2zM925 447h4v1h-4zM931 447h2v1h-2zM934 447h6v1h-6zM941 447h3v1h-3zM945 447h5v1h-5zM951 447h5v1h-5zM959 447h6v1h-6zM966 447h1v1h-1zM970 447h1v1h-1zM747 448h1v1h-1zM759 448h1v1h-1zM765 448h1v1h-1zM769 448h1v1h-1zM771 448h2v1h-2zM775 448h2v1h-2zM781 448h1v1h-1zM784 448h1v1h-1zM787 448h2v1h-2zM790 448h1v1h-1zM797 448h1v1h-1zM804 448h1v1h-1zM811 448h4v1h-4zM816 448h2v1h-2zM819 448h1v1h-1zM821 448h3v1h-3zM825 448h1v1h-1zM827 448h3v1h-3zM831 448h1v1h-1zM833 448h6v1h-6zM840 448h1v1h-1zM842 448h2v1h-2zM845 448h3v1h-3zM849 448h9v1h-9zM860 448h3v1h-3zM864 448h1v1h-1zM866 448h1v1h-1zM868 448h2v1h-2zM871 448h1v1h-1zM873 448h1v1h-1zM876 448h2v1h-2zM879 448h4v1h-4zM884 448h4v1h-4zM889 448h1v1h-1zM891 448h5v1h-5zM899 448h1v1h-1zM901 448h2v1h-2zM905 448h9v1h-9zM915 448h11v1h-11zM928 448h1v1h-1zM931 448h8v1h-8zM940 448h3v1h-3zM944 448h3v1h-3zM948 448h2v1h-2zM952 448h3v1h-3zM958 448h1v1h-1zM960 448h3v1h-3zM964 448h5v1h-5zM980 448h1v1h-1zM982 448h1v1h-1zM750 449h1v1h-1zM754 449h1v1h-1zM764 449h2v1h-2zM768 449h1v1h-1zM770 449h1v1h-1zM772 449h1v1h-1zM776 449h3v1h-3zM781 449h1v1h-1zM784 449h1v1h-1zM787 449h1v1h-1zM793 449h1v1h-1zM795 449h2v1h-2zM802 449h1v1h-1zM804 449h2v1h-2zM808 449h4v1h-4zM814 449h4v1h-4zM819 449h1v1h-1zM823 449h2v1h-2zM826 449h6v1h-6zM833 449h2v1h-2zM837 449h9v1h-9zM847 449h2v1h-2zM850 449h2v1h-2zM855 449h1v1h-1zM857 449h5v1h-5zM863 449h2v1h-2zM866 449h1v1h-1zM868 449h14v1h-14zM883 449h28v1h-28zM912 449h8v1h-8zM921 449h5v1h-5zM927 449h11v1h-11zM939 449h4v1h-4zM944 449h1v1h-1zM946 449h6v1h-6zM953 449h6v1h-6zM960 449h4v1h-4zM970 449h3v1h-3zM976 449h1v1h-1zM983 449h1v1h-1zM987 449h1v1h-1zM744 450h1v1h-1zM748 450h2v1h-2zM753 450h1v1h-1zM755 450h1v1h-1zM759 450h1v1h-1zM763 450h1v1h-1zM766 450h1v1h-1zM769 450h1v1h-1zM773 450h2v1h-2zM776 450h3v1h-3zM780 450h1v1h-1zM782 450h1v1h-1zM786 450h2v1h-2zM789 450h1v1h-1zM791 450h1v1h-1zM793 450h1v1h-1zM795 450h2v1h-2zM799 450h3v1h-3zM806 450h6v1h-6zM813 450h9v1h-9zM823 450h1v1h-1zM825 450h2v1h-2zM828 450h9v1h-9zM838 450h1v1h-1zM841 450h9v1h-9zM852 450h2v1h-2zM855 450h26v1h-26zM882 450h13v1h-13zM896 450h10v1h-10zM907 450h32v1h-32zM940 450h5v1h-5zM946 450h3v1h-3zM950 450h17v1h-17zM972 450h1v1h-1zM976 450h2v1h-2zM981 450h1v1h-1zM990 450h1v1h-1zM745 451h2v1h-2zM750 451h1v1h-1zM754 451h1v1h-1zM756 451h5v1h-5zM765 451h4v1h-4zM772 451h2v1h-2zM775 451h4v1h-4zM782 451h1v1h-1zM785 451h2v1h-2zM789 451h2v1h-2zM792 451h5v1h-5zM799 451h6v1h-6zM808 451h3v1h-3zM812 451h1v1h-1zM814 451h3v1h-3zM818 451h5v1h-5zM824 451h5v1h-5zM830 451h4v1h-4zM835 451h2v1h-2zM838 451h1v1h-1zM840 451h8v1h-8zM849 451h14v1h-14zM864 451h42v1h-42zM907 451h9v1h-9zM917 451h3v1h-3zM921 451h10v1h-10zM932 451h3v1h-3zM936 451h2v1h-2zM939 451h13v1h-13zM953 451h2v1h-2zM956 451h6v1h-6zM963 451h4v1h-4zM968 451h1v1h-1zM970 451h5v1h-5zM976 451h1v1h-1zM978 451h2v1h-2zM982 451h3v1h-3zM988 451h1v1h-1zM991 451h2v1h-2zM743 452h1v1h-1zM749 452h1v1h-1zM756 452h1v1h-1zM758 452h1v1h-1zM765 452h2v1h-2zM768 452h2v1h-2zM771 452h6v1h-6zM779 452h2v1h-2zM783 452h1v1h-1zM785 452h1v1h-1zM787 452h5v1h-5zM793 452h1v1h-1zM795 452h1v1h-1zM799 452h7v1h-7zM807 452h8v1h-8zM816 452h6v1h-6zM823 452h10v1h-10zM834 452h12v1h-12zM847 452h5v1h-5zM853 452h31v1h-31zM885 452h21v1h-21zM907 452h2v1h-2zM910 452h9v1h-9zM920 452h8v1h-8zM929 452h5v1h-5zM935 452h3v1h-3zM939 452h10v1h-10zM950 452h11v1h-11zM962 452h1v1h-1zM964 452h3v1h-3zM969 452h1v1h-1zM971 452h3v1h-3zM975 452h1v1h-1zM977 452h1v1h-1zM979 452h2v1h-2zM982 452h1v1h-1zM984 452h3v1h-3zM988 452h1v1h-1zM990 452h1v1h-1zM992 452h1v1h-1zM997 452h1v1h-1zM1015 452h2v1h-2zM739 453h3v1h-3zM746 453h2v1h-2zM754 453h1v1h-1zM756 453h5v1h-5zM762 453h4v1h-4zM767 453h1v1h-1zM771 453h1v1h-1zM773 453h3v1h-3zM777 453h3v1h-3zM781 453h6v1h-6zM788 453h3v1h-3zM792 453h2v1h-2zM796 453h4v1h-4zM801 453h1v1h-1zM803 453h1v1h-1zM805 453h3v1h-3zM810 453h2v1h-2zM813 453h3v1h-3zM817 453h14v1h-14zM832 453h11v1h-11zM844 453h12v1h-12zM857 453h9v1h-9zM867 453h43v1h-43zM911 453h16v1h-16zM928 453h29v1h-29zM958 453h20v1h-20zM980 453h1v1h-1zM985 453h6v1h-6zM994 453h1v1h-1zM997 453h2v1h-2zM1000 453h1v1h-1zM1009 453h1v1h-1zM1011 453h2v1h-2zM1015 453h1v1h-1zM1021 453h1v1h-1zM738 454h1v1h-1zM740 454h2v1h-2zM746 454h2v1h-2zM749 454h2v1h-2zM754 454h1v1h-1zM757 454h3v1h-3zM761 454h1v1h-1zM765 454h6v1h-6zM772 454h9v1h-9zM783 454h7v1h-7zM791 454h2v1h-2zM794 454h6v1h-6zM801 454h3v1h-3zM805 454h35v1h-35zM841 454h4v1h-4zM846 454h23v1h-23zM870 454h7v1h-7zM878 454h7v1h-7zM886 454h10v1h-10zM897 454h45v1h-45zM943 454h23v1h-23zM967 454h2v1h-2zM970 454h7v1h-7zM979 454h1v1h-1zM982 454h2v1h-2zM985 454h1v1h-1zM988 454h1v1h-1zM994 454h1v1h-1zM996 454h1v1h-1zM1000 454h1v1h-1zM1002 454h2v1h-2zM1005 454h2v1h-2zM1009 454h2v1h-2zM1013 454h1v1h-1zM1020 454h1v1h-1zM729 455h1v1h-1zM738 455h2v1h-2zM742 455h1v1h-1zM744 455h1v1h-1zM746 455h2v1h-2zM750 455h1v1h-1zM752 455h10v1h-10zM764 455h3v1h-3zM771 455h11v1h-11zM783 455h9v1h-9zM793 455h4v1h-4zM798 455h9v1h-9zM809 455h15v1h-15zM825 455h11v1h-11zM837 455h16v1h-16zM854 455h4v1h-4zM859 455h37v1h-37zM897 455h7v1h-7zM905 455h58v1h-58zM964 455h4v1h-4zM969 455h3v1h-3zM973 455h3v1h-3zM979 455h11v1h-11zM991 455h4v1h-4zM997 455h1v1h-1zM1003 455h1v1h-1zM1005 455h1v1h-1zM1007 455h1v1h-1zM1010 455h1v1h-1zM1012 455h1v1h-1zM732 456h1v1h-1zM735 456h1v1h-1zM740 456h1v1h-1zM745 456h1v1h-1zM747 456h1v1h-1zM749 456h1v1h-1zM753 456h1v1h-1zM755 456h8v1h-8zM764 456h2v1h-2zM767 456h1v1h-1zM770 456h2v1h-2zM774 456h1v1h-1zM776 456h2v1h-2zM779 456h31v1h-31zM811 456h4v1h-4zM816 456h9v1h-9zM826 456h25v1h-25zM852 456h129v1h-129zM982 456h2v1h-2zM986 456h1v1h-1zM989 456h3v1h-3zM993 456h1v1h-1zM995 456h2v1h-2zM998 456h3v1h-3zM1002 456h1v1h-1zM1005 456h2v1h-2zM1008 456h2v1h-2zM1011 456h1v1h-1zM1015 456h2v1h-2zM1020 456h2v1h-2zM1024 456h3v1h-3zM1029 456h1v1h-1zM736 457h1v1h-1zM738 457h1v1h-1zM741 457h2v1h-2zM744 457h1v1h-1zM746 457h1v1h-1zM748 457h4v1h-4zM753 457h3v1h-3zM757 457h6v1h-6zM765 457h9v1h-9zM775 457h11v1h-11zM787 457h62v1h-62zM850 457h56v1h-56zM907 457h58v1h-58zM966 457h21v1h-21zM988 457h4v1h-4zM995 457h2v1h-2zM998 457h1v1h-1zM1002 457h1v1h-1zM1004 457h3v1h-3zM1010 457h1v1h-1zM1013 457h3v1h-3zM1017 457h1v1h-1zM1021 457h1v1h-1zM729 458h1v1h-1zM734 458h1v1h-1zM736 458h3v1h-3zM740 458h1v1h-1zM742 458h1v1h-1zM744 458h1v1h-1zM746 458h4v1h-4zM751 458h4v1h-4zM756 458h18v1h-18zM775 458h8v1h-8zM785 458h20v1h-20zM806 458h23v1h-23zM830 458h7v1h-7zM838 458h10v1h-10zM849 458h83v1h-83zM933 458h52v1h-52zM986 458h1v1h-1zM988 458h1v1h-1zM990 458h2v1h-2zM994 458h1v1h-1zM996 458h1v1h-1zM998 458h1v1h-1zM1000 458h1v1h-1zM1003 458h1v1h-1zM1007 458h2v1h-2zM1013 458h1v1h-1zM1015 458h1v1h-1zM1019 458h1v1h-1zM1021 458h1v1h-1zM1024 458h2v1h-2zM722 459h1v1h-1zM724 459h1v1h-1zM728 459h1v1h-1zM730 459h5v1h-5zM736 459h2v1h-2zM739 459h1v1h-1zM742 459h1v1h-1zM744 459h2v1h-2zM748 459h3v1h-3zM752 459h8v1h-8zM761 459h28v1h-28zM790 459h24v1h-24zM815 459h41v1h-41zM857 459h46v1h-46zM904 459h12v1h-12zM917 459h57v1h-57zM975 459h1v1h-1zM977 459h2v1h-2zM980 459h9v1h-9zM991 459h3v1h-3zM995 459h1v1h-1zM998 459h1v1h-1zM1001 459h2v1h-2zM1004 459h2v1h-2zM1007 459h3v1h-3zM1012 459h1v1h-1zM1014 459h1v1h-1zM1018 459h2v1h-2zM1027 459h1v1h-1zM1039 459h1v1h-1zM724 460h1v1h-1zM727 460h2v1h-2zM731 460h1v1h-1zM733 460h1v1h-1zM736 460h1v1h-1zM738 460h4v1h-4zM744 460h5v1h-5zM750 460h6v1h-6zM759 460h8v1h-8zM768 460h15v1h-15zM784 460h209v1h-209zM994 460h7v1h-7zM1003 460h2v1h-2zM1006 460h4v1h-4zM1011 460h3v1h-3zM1016 460h2v1h-2zM1021 460h1v1h-1zM1025 460h1v1h-1zM1029 460h1v1h-1zM1038 460h1v1h-1zM717 461h1v1h-1zM721 461h4v1h-4zM728 461h1v1h-1zM731 461h3v1h-3zM736 461h5v1h-5zM743 461h4v1h-4zM748 461h1v1h-1zM750 461h2v1h-2zM753 461h2v1h-2zM756 461h1v1h-1zM758 461h169v1h-169zM928 461h58v1h-58zM987 461h7v1h-7zM996 461h4v1h-4zM1001 461h1v1h-1zM1003 461h4v1h-4zM1008 461h1v1h-1zM1011 461h1v1h-1zM1013 461h1v1h-1zM1015 461h1v1h-1zM1017 461h1v1h-1zM1019 461h1v1h-1zM1021 461h2v1h-2zM1025 461h1v1h-1zM714 462h1v1h-1zM716 462h1v1h-1zM718 462h1v1h-1zM723 462h2v1h-2zM727 462h2v1h-2zM730 462h3v1h-3zM734 462h6v1h-6zM741 462h30v1h-30zM772 462h5v1h-5zM778 462h5v1h-5zM784 462h3v1h-3zM788 462h127v1h-127zM916 462h81v1h-81zM999 462h3v1h-3zM1003 462h1v1h-1zM1005 462h2v1h-2zM1008 462h1v1h-1zM1011 462h4v1h-4zM1016 462h2v1h-2zM1019 462h1v1h-1zM1021 462h1v1h-1zM1023 462h1v1h-1zM1026 462h1v1h-1zM1034 462h1v1h-1zM1038 462h1v1h-1zM707 463h1v1h-1zM712 463h2v1h-2zM715 463h1v1h-1zM717 463h4v1h-4zM726 463h8v1h-8zM735 463h1v1h-1zM737 463h3v1h-3zM741 463h10v1h-10zM752 463h11v1h-11zM764 463h11v1h-11zM776 463h55v1h-55zM832 463h89v1h-89zM922 463h10v1h-10zM933 463h63v1h-63zM997 463h6v1h-6zM1004 463h1v1h-1zM1007 463h1v1h-1zM1009 463h1v1h-1zM1011 463h1v1h-1zM1016 463h1v1h-1zM1019 463h1v1h-1zM1023 463h1v1h-1zM1026 463h2v1h-2zM1035 463h2v1h-2zM1039 463h1v1h-1zM1044 463h1v1h-1zM703 464h1v1h-1zM705 464h1v1h-1zM712 464h1v1h-1zM715 464h4v1h-4zM723 464h2v1h-2zM726 464h1v1h-1zM728 464h2v1h-2zM731 464h1v1h-1zM734 464h13v1h-13zM748 464h19v1h-19zM768 464h222v1h-222zM991 464h2v1h-2zM994 464h10v1h-10zM1005 464h3v1h-3zM1010 464h1v1h-1zM1012 464h1v1h-1zM1014 464h1v1h-1zM1017 464h3v1h-3zM1023 464h6v1h-6zM1032 464h1v1h-1zM1035 464h2v1h-2zM1041 464h1v1h-1zM697 465h1v1h-1zM699 465h1v1h-1zM707 465h2v1h-2zM713 465h1v1h-1zM716 465h5v1h-5zM724 465h3v1h-3zM728 465h1v1h-1zM730 465h7v1h-7zM738 465h22v1h-22zM761 465h148v1h-148zM910 465h77v1h-77zM989 465h4v1h-4zM994 465h16v1h-16zM1012 465h1v1h-1zM1014 465h1v1h-1zM1016 465h3v1h-3zM1023 465h2v1h-2zM1027 465h2v1h-2zM1031 465h4v1h-4zM1036 465h1v1h-1zM1039 465h1v1h-1zM1047 465h1v1h-1zM1049 465h1v1h-1zM694 466h1v1h-1zM698 466h1v1h-1zM700 466h1v1h-1zM702 466h2v1h-2zM709 466h1v1h-1zM711 466h1v1h-1zM713 466h1v1h-1zM715 466h2v1h-2zM718 466h6v1h-6zM725 466h7v1h-7zM733 466h4v1h-4zM738 466h12v1h-12zM751 466h8v1h-8zM760 466h13v1h-13zM774 466h156v1h-156zM931 466h50v1h-50zM982 466h22v1h-22zM1006 466h5v1h-5zM1013 466h4v1h-4zM1018 466h1v1h-1zM1021 466h10v1h-10zM1033 466h2v1h-2zM1038 466h1v1h-1zM1045 466h1v1h-1zM1050 466h1v1h-1zM695 467h1v1h-1zM698 467h1v1h-1zM702 467h1v1h-1zM704 467h2v1h-2zM707 467h8v1h-8zM716 467h4v1h-4zM722 467h279v1h-279zM1002 467h1v1h-1zM1004 467h4v1h-4zM1011 467h5v1h-5zM1017 467h11v1h-11zM1030 467h1v1h-1zM1033 467h2v1h-2zM1039 467h2v1h-2zM1042 467h1v1h-1zM1044 467h1v1h-1zM692 468h1v1h-1zM696 468h6v1h-6zM703 468h1v1h-1zM706 468h2v1h-2zM709 468h4v1h-4zM715 468h11v1h-11zM727 468h8v1h-8zM736 468h19v1h-19zM756 468h230v1h-230zM987 468h12v1h-12zM1000 468h6v1h-6zM1007 468h2v1h-2zM1010 468h3v1h-3zM1014 468h1v1h-1zM1016 468h3v1h-3zM1021 468h4v1h-4zM1026 468h4v1h-4zM1031 468h1v1h-1zM1037 468h1v1h-1zM1046 468h1v1h-1zM687 469h1v1h-1zM689 469h1v1h-1zM694 469h2v1h-2zM697 469h1v1h-1zM702 469h1v1h-1zM704 469h1v1h-1zM706 469h1v1h-1zM710 469h7v1h-7zM718 469h2v1h-2zM722 469h68v1h-68zM791 469h212v1h-212zM1004 469h3v1h-3zM1009 469h1v1h-1zM1012 469h6v1h-6zM1019 469h2v1h-2zM1022 469h1v1h-1zM1025 469h2v1h-2zM1028 469h2v1h-2zM1031 469h2v1h-2zM1036 469h3v1h-3zM1044 469h1v1h-1zM1048 469h1v1h-1zM684 470h1v1h-1zM690 470h2v1h-2zM693 470h1v1h-1zM697 470h1v1h-1zM699 470h2v1h-2zM702 470h2v1h-2zM705 470h1v1h-1zM707 470h4v1h-4zM712 470h3v1h-3zM716 470h7v1h-7zM724 470h283v1h-283zM1009 470h5v1h-5zM1015 470h3v1h-3zM1019 470h2v1h-2zM1022 470h1v1h-1zM1024 470h1v1h-1zM1030 470h5v1h-5zM1039 470h2v1h-2zM1042 470h1v1h-1zM680 471h1v1h-1zM682 471h1v1h-1zM689 471h1v1h-1zM691 471h1v1h-1zM696 471h3v1h-3zM701 471h2v1h-2zM704 471h3v1h-3zM708 471h6v1h-6zM716 471h292v1h-292zM1009 471h6v1h-6zM1016 471h3v1h-3zM1020 471h1v1h-1zM1022 471h1v1h-1zM1024 471h1v1h-1zM1026 471h1v1h-1zM1028 471h2v1h-2zM1038 471h1v1h-1zM1042 471h1v1h-1zM1045 471h1v1h-1zM681 472h1v1h-1zM683 472h1v1h-1zM685 472h1v1h-1zM688 472h1v1h-1zM690 472h2v1h-2zM694 472h5v1h-5zM701 472h4v1h-4zM706 472h4v1h-4zM711 472h30v1h-30zM742 472h274v1h-274zM1019 472h12v1h-12zM1033 472h4v1h-4zM1038 472h1v1h-1zM1046 472h1v1h-1zM1048 472h1v1h-1zM681 473h4v1h-4zM689 473h4v1h-4zM694 473h7v1h-7zM702 473h35v1h-35zM738 473h255v1h-255zM994 473h21v1h-21zM1017 473h2v1h-2zM1021 473h3v1h-3zM1025 473h3v1h-3zM1030 473h3v1h-3zM1034 473h5v1h-5zM1041 473h1v1h-1zM1045 473h4v1h-4zM1051 473h1v1h-1zM669 474h2v1h-2zM672 474h1v1h-1zM675 474h1v1h-1zM678 474h1v1h-1zM683 474h1v1h-1zM685 474h4v1h-4zM691 474h3v1h-3zM696 474h23v1h-23zM720 474h278v1h-278zM999 474h32v1h-32zM1032 474h4v1h-4zM1038 474h1v1h-1zM1042 474h4v1h-4zM1048 474h1v1h-1zM668 475h1v1h-1zM672 475h2v1h-2zM678 475h1v1h-1zM681 475h2v1h-2zM684 475h5v1h-5zM691 475h2v1h-2zM694 475h329v1h-329zM1024 475h2v1h-2zM1027 475h3v1h-3zM1031 475h3v1h-3zM1036 475h1v1h-1zM1039 475h1v1h-1zM1044 475h1v1h-1zM1047 475h1v1h-1zM1052 475h1v1h-1zM1054 475h1v1h-1zM659 476h1v1h-1zM667 476h4v1h-4zM672 476h1v1h-1zM677 476h1v1h-1zM679 476h4v1h-4zM684 476h3v1h-3zM689 476h1v1h-1zM691 476h7v1h-7zM699 476h1v1h-1zM701 476h324v1h-324zM1026 476h2v1h-2zM1029 476h3v1h-3zM1033 476h3v1h-3zM1037 476h2v1h-2zM1040 476h3v1h-3zM1046 476h1v1h-1zM1048 476h3v1h-3zM657 477h1v1h-1zM663 477h1v1h-1zM668 477h1v1h-1zM672 477h2v1h-2zM675 477h6v1h-6zM682 477h3v1h-3zM686 477h3v1h-3zM691 477h2v1h-2zM694 477h329v1h-329zM1024 477h5v1h-5zM1030 477h1v1h-1zM1033 477h1v1h-1zM1035 477h2v1h-2zM1038 477h1v1h-1zM1044 477h1v1h-1zM1046 477h1v1h-1zM1049 477h4v1h-4zM1055 477h3v1h-3zM663 478h2v1h-2zM673 478h1v1h-1zM676 478h3v1h-3zM681 478h5v1h-5zM687 478h2v1h-2zM690 478h61v1h-61zM752 478h267v1h-267zM1020 478h7v1h-7zM1028 478h1v1h-1zM1030 478h3v1h-3zM1034 478h2v1h-2zM1039 478h4v1h-4zM1044 478h2v1h-2zM1048 478h2v1h-2zM1051 478h1v1h-1zM658 479h1v1h-1zM660 479h4v1h-4zM665 479h1v1h-1zM667 479h2v1h-2zM670 479h1v1h-1zM674 479h2v1h-2zM677 479h3v1h-3zM681 479h13v1h-13zM695 479h2v1h-2zM698 479h319v1h-319zM1018 479h3v1h-3zM1022 479h4v1h-4zM1027 479h3v1h-3zM1031 479h3v1h-3zM1036 479h1v1h-1zM1038 479h3v1h-3zM1042 479h3v1h-3zM1050 479h1v1h-1zM1052 479h1v1h-1zM1055 479h1v1h-1zM1057 479h1v1h-1zM1061 479h2v1h-2zM652 480h3v1h-3zM661 480h1v1h-1zM664 480h6v1h-6zM672 480h16v1h-16zM689 480h3v1h-3zM693 480h321v1h-321zM1015 480h1v1h-1zM1017 480h9v1h-9zM1027 480h5v1h-5zM1034 480h2v1h-2zM1039 480h3v1h-3zM1043 480h5v1h-5zM1049 480h1v1h-1zM1055 480h2v1h-2zM1059 480h1v1h-1zM653 481h3v1h-3zM658 481h1v1h-1zM661 481h5v1h-5zM667 481h1v1h-1zM669 481h321v1h-321zM991 481h3v1h-3zM995 481h1v1h-1zM997 481h25v1h-25zM1023 481h10v1h-10zM1034 481h2v1h-2zM1038 481h5v1h-5zM1047 481h4v1h-4zM1053 481h1v1h-1zM1058 481h1v1h-1zM1060 481h1v1h-1zM649 482h1v1h-1zM651 482h1v1h-1zM653 482h1v1h-1zM659 482h2v1h-2zM662 482h1v1h-1zM664 482h10v1h-10zM675 482h6v1h-6zM682 482h7v1h-7zM691 482h10v1h-10zM702 482h308v1h-308zM1011 482h7v1h-7zM1019 482h9v1h-9zM1029 482h1v1h-1zM1031 482h6v1h-6zM1038 482h1v1h-1zM1040 482h1v1h-1zM1043 482h1v1h-1zM1045 482h5v1h-5zM1051 482h2v1h-2zM1056 482h1v1h-1zM1058 482h2v1h-2zM650 483h2v1h-2zM657 483h3v1h-3zM661 483h1v1h-1zM663 483h3v1h-3zM667 483h6v1h-6zM674 483h10v1h-10zM685 483h5v1h-5zM691 483h291v1h-291zM983 483h21v1h-21zM1005 483h14v1h-14zM1020 483h17v1h-17zM1038 483h6v1h-6zM1045 483h3v1h-3zM1052 483h1v1h-1zM1057 483h1v1h-1zM1059 483h1v1h-1zM1065 483h1v1h-1zM648 484h2v1h-2zM652 484h1v1h-1zM654 484h1v1h-1zM656 484h1v1h-1zM658 484h289v1h-289zM948 484h72v1h-72zM1021 484h18v1h-18zM1040 484h2v1h-2zM1044 484h1v1h-1zM1047 484h1v1h-1zM1051 484h5v1h-5zM1060 484h1v1h-1zM1064 484h1v1h-1zM649 485h1v1h-1zM651 485h2v1h-2zM655 485h3v1h-3zM659 485h1v1h-1zM661 485h8v1h-8zM670 485h16v1h-16zM687 485h302v1h-302zM990 485h47v1h-47zM1042 485h4v1h-4zM1047 485h3v1h-3zM1051 485h1v1h-1zM1056 485h2v1h-2zM1061 485h1v1h-1zM1068 485h1v1h-1zM649 486h1v1h-1zM652 486h1v1h-1zM655 486h1v1h-1zM658 486h2v1h-2zM661 486h12v1h-12zM674 486h44v1h-44zM719 486h16v1h-16zM736 486h138v1h-138zM875 486h160v1h-160zM1036 486h1v1h-1zM1038 486h1v1h-1zM1040 486h2v1h-2zM1043 486h3v1h-3zM1047 486h1v1h-1zM1049 486h1v1h-1zM1054 486h3v1h-3zM1062 486h2v1h-2zM645 487h2v1h-2zM649 487h1v1h-1zM652 487h4v1h-4zM657 487h356v1h-356zM1014 487h28v1h-28zM1043 487h2v1h-2zM1046 487h2v1h-2zM1051 487h6v1h-6zM1064 487h1v1h-1zM645 488h1v1h-1zM650 488h2v1h-2zM653 488h2v1h-2zM656 488h5v1h-5zM662 488h384v1h-384zM1047 488h1v1h-1zM1049 488h3v1h-3zM1053 488h1v1h-1zM1060 488h2v1h-2zM644 489h1v1h-1zM647 489h1v1h-1zM650 489h1v1h-1zM652 489h2v1h-2zM655 489h10v1h-10zM666 489h159v1h-159zM826 489h187v1h-187zM1014 489h30v1h-30zM1046 489h4v1h-4zM1051 489h1v1h-1zM1053 489h2v1h-2zM1056 489h3v1h-3zM1063 489h1v1h-1zM1065 489h3v1h-3zM646 490h6v1h-6zM653 490h1v1h-1zM655 490h5v1h-5zM661 490h8v1h-8zM670 490h330v1h-330zM1001 490h13v1h-13zM1015 490h15v1h-15zM1031 490h2v1h-2zM1034 490h7v1h-7zM1042 490h2v1h-2zM1045 490h5v1h-5zM1052 490h5v1h-5zM1058 490h1v1h-1zM1060 490h1v1h-1zM1062 490h1v1h-1zM1072 490h1v1h-1zM642 491h3v1h-3zM646 491h2v1h-2zM649 491h1v1h-1zM651 491h1v1h-1zM653 491h1v1h-1zM655 491h354v1h-354zM1010 491h32v1h-32zM1043 491h4v1h-4zM1048 491h3v1h-3zM1052 491h2v1h-2zM1055 491h3v1h-3zM1059 491h1v1h-1zM1065 491h1v1h-1zM1067 491h1v1h-1zM1069 491h1v1h-1zM641 492h1v1h-1zM644 492h2v1h-2zM648 492h3v1h-3zM652 492h346v1h-346zM999 492h50v1h-50zM1050 492h4v1h-4zM1055 492h4v1h-4zM1060 492h1v1h-1zM1062 492h1v1h-1zM1066 492h1v1h-1zM1069 492h1v1h-1zM645 493h3v1h-3zM650 493h2v1h-2zM653 493h368v1h-368zM1022 493h24v1h-24zM1047 493h1v1h-1zM1049 493h1v1h-1zM1051 493h4v1h-4zM1056 493h3v1h-3zM1060 493h1v1h-1zM1064 493h2v1h-2zM1071 493h1v1h-1zM1073 493h1v1h-1zM640 494h2v1h-2zM643 494h1v1h-1zM645 494h7v1h-7zM653 494h3v1h-3zM657 494h381v1h-381zM1039 494h9v1h-9zM1049 494h1v1h-1zM1051 494h3v1h-3zM1056 494h2v1h-2zM1059 494h1v1h-1zM1066 494h1v1h-1zM1073 494h1v1h-1zM643 495h1v1h-1zM646 495h3v1h-3zM650 495h377v1h-377zM1028 495h3v1h-3zM1032 495h3v1h-3zM1036 495h2v1h-2zM1039 495h8v1h-8zM1048 495h4v1h-4zM1053 495h4v1h-4zM1060 495h1v1h-1zM1063 495h1v1h-1zM1067 495h1v1h-1zM1072 495h1v1h-1zM1075 495h1v1h-1zM639 496h1v1h-1zM643 496h173v1h-173zM817 496h54v1h-54zM872 496h120v1h-120zM993 496h37v1h-37zM1031 496h19v1h-19zM1051 496h3v1h-3zM1055 496h3v1h-3zM1059 496h2v1h-2zM1062 496h1v1h-1zM1065 496h4v1h-4zM1071 496h1v1h-1zM1073 496h2v1h-2zM636 497h1v1h-1zM640 497h1v1h-1zM642 497h1v1h-1zM644 497h1v1h-1zM647 497h2v1h-2zM651 497h393v1h-393zM1046 497h10v1h-10zM1057 497h5v1h-5zM1063 497h1v1h-1zM1066 497h2v1h-2zM1069 497h3v1h-3zM1073 497h2v1h-2zM640 498h1v1h-1zM643 498h1v1h-1zM645 498h2v1h-2zM649 498h7v1h-7zM657 498h238v1h-238zM896 498h117v1h-117zM1014 498h27v1h-27zM1042 498h18v1h-18zM1061 498h3v1h-3zM1070 498h1v1h-1zM1073 498h1v1h-1zM639 499h3v1h-3zM643 499h2v1h-2zM646 499h1v1h-1zM648 499h410v1h-410zM1059 499h3v1h-3zM1063 499h1v1h-1zM1066 499h2v1h-2zM1071 499h2v1h-2zM1077 499h1v1h-1zM636 500h1v1h-1zM642 500h2v1h-2zM645 500h4v1h-4zM650 500h417v1h-417zM1069 500h1v1h-1zM1071 500h1v1h-1zM1078 500h1v1h-1zM639 501h406v1h-406zM1046 501h4v1h-4zM1051 501h6v1h-6zM1058 501h5v1h-5zM1065 501h1v1h-1zM1067 501h1v1h-1zM1070 501h1v1h-1zM1072 501h1v1h-1zM1074 501h1v1h-1zM1077 501h1v1h-1zM636 502h1v1h-1zM638 502h1v1h-1zM641 502h1v1h-1zM643 502h2v1h-2zM646 502h410v1h-410zM1057 502h5v1h-5zM1063 502h2v1h-2zM1066 502h6v1h-6zM1080 502h1v1h-1zM637 503h1v1h-1zM640 503h4v1h-4zM645 503h2v1h-2zM648 503h84v1h-84zM733 503h175v1h-175zM909 503h145v1h-145zM1055 503h3v1h-3zM1059 503h3v1h-3zM1064 503h2v1h-2zM1068 503h1v1h-1zM1070 503h4v1h-4zM1075 503h1v1h-1zM1080 503h1v1h-1zM1082 503h1v1h-1zM639 504h1v1h-1zM642 504h1v1h-1zM644 504h3v1h-3zM648 504h418v1h-418zM1067 504h5v1h-5zM1074 504h1v1h-1zM1079 504h1v1h-1zM635 505h1v1h-1zM638 505h3v1h-3zM642 505h5v1h-5zM648 505h128v1h-128zM777 505h282v1h-282zM1060 505h6v1h-6zM1068 505h1v1h-1zM1070 505h1v1h-1zM1072 505h1v1h-1zM636 506h1v1h-1zM638 506h3v1h-3zM643 506h416v1h-416zM1060 506h4v1h-4zM1065 506h7v1h-7zM1074 506h1v1h-1zM1079 506h3v1h-3zM1084 506h1v1h-1zM636 507h1v1h-1zM638 507h1v1h-1zM640 507h406v1h-406zM1047 507h19v1h-19zM1067 507h1v1h-1zM1069 507h4v1h-4zM1079 507h1v1h-1zM1081 507h1v1h-1zM637 508h1v1h-1zM639 508h2v1h-2zM642 508h205v1h-205zM848 508h166v1h-166zM1015 508h59v1h-59zM1075 508h1v1h-1zM1078 508h1v1h-1zM1082 508h1v1h-1zM634 509h3v1h-3zM639 509h4v1h-4zM644 509h2v1h-2zM647 509h417v1h-417zM1065 509h7v1h-7zM1073 509h2v1h-2zM1076 509h1v1h-1zM1080 509h1v1h-1zM1084 509h1v1h-1zM638 510h3v1h-3zM642 510h15v1h-15zM658 510h403v1h-403zM1062 510h1v1h-1zM1064 510h7v1h-7zM1074 510h1v1h-1zM1076 510h4v1h-4zM635 511h1v1h-1zM638 511h433v1h-433zM1072 511h3v1h-3zM1076 511h2v1h-2zM1081 511h2v1h-2zM632 512h1v1h-1zM637 512h11v1h-11zM649 512h419v1h-419zM1069 512h2v1h-2zM1072 512h4v1h-4zM1077 512h1v1h-1zM1081 512h2v1h-2zM1087 512h1v1h-1zM633 513h1v1h-1zM635 513h1v1h-1zM638 513h1v1h-1zM640 513h413v1h-413zM1054 513h20v1h-20zM1075 513h1v1h-1zM1079 513h1v1h-1zM1082 513h1v1h-1zM634 514h2v1h-2zM637 514h436v1h-436zM1074 514h5v1h-5zM1080 514h3v1h-3zM632 515h1v1h-1zM635 515h1v1h-1zM638 515h435v1h-435zM1074 515h1v1h-1zM1076 515h2v1h-2zM1079 515h1v1h-1zM1081 515h1v1h-1zM1087 515h1v1h-1zM1090 515h1v1h-1zM632 516h1v1h-1zM635 516h3v1h-3zM640 516h437v1h-437zM1078 516h2v1h-2zM1082 516h3v1h-3zM1086 516h1v1h-1zM1088 516h1v1h-1zM1090 516h1v1h-1zM633 517h1v1h-1zM636 517h435v1h-435zM1074 517h2v1h-2zM1078 517h2v1h-2zM1081 517h1v1h-1zM1083 517h2v1h-2zM1089 517h1v1h-1zM631 518h1v1h-1zM633 518h1v1h-1zM636 518h1v1h-1zM639 518h433v1h-433zM1073 518h6v1h-6zM1080 518h1v1h-1zM1091 518h1v1h-1zM628 519h1v1h-1zM630 519h3v1h-3zM634 519h4v1h-4zM639 519h295v1h-295zM935 519h130v1h-130zM1066 519h6v1h-6zM1073 519h3v1h-3zM1077 519h3v1h-3zM1082 519h1v1h-1zM1084 519h1v1h-1zM1087 519h1v1h-1zM1090 519h1v1h-1zM632 520h1v1h-1zM634 520h1v1h-1zM636 520h21v1h-21zM658 520h358v1h-358zM1017 520h61v1h-61zM1080 520h5v1h-5zM1086 520h1v1h-1zM1089 520h1v1h-1zM629 521h1v1h-1zM631 521h2v1h-2zM635 521h442v1h-442zM1078 521h3v1h-3zM1088 521h1v1h-1zM629 522h1v1h-1zM632 522h1v1h-1zM634 522h2v1h-2zM637 522h429v1h-429zM1067 522h13v1h-13zM1084 522h3v1h-3zM1088 522h1v1h-1zM628 523h1v1h-1zM630 523h1v1h-1zM633 523h443v1h-443zM1077 523h1v1h-1zM1079 523h1v1h-1zM1081 523h1v1h-1zM1083 523h1v1h-1zM1085 523h1v1h-1zM1092 523h2v1h-2zM625 524h1v1h-1zM629 524h1v1h-1zM631 524h1v1h-1zM634 524h1v1h-1zM636 524h441v1h-441zM1079 524h2v1h-2zM1083 524h1v1h-1zM1088 524h2v1h-2zM1092 524h2v1h-2zM628 525h7v1h-7zM636 525h450v1h-450zM1087 525h1v1h-1zM1090 525h2v1h-2zM1095 525h1v1h-1zM627 526h2v1h-2zM630 526h2v1h-2zM634 526h446v1h-446zM1081 526h2v1h-2zM1084 526h2v1h-2zM1087 526h1v1h-1zM1091 526h3v1h-3zM625 527h2v1h-2zM629 527h2v1h-2zM632 527h1v1h-1zM634 527h6v1h-6zM641 527h395v1h-395zM1037 527h40v1h-40zM1078 527h4v1h-4zM1083 527h4v1h-4zM1089 527h1v1h-1zM1091 527h1v1h-1zM1096 527h1v1h-1zM627 528h1v1h-1zM630 528h1v1h-1zM632 528h456v1h-456zM1090 528h2v1h-2zM1093 528h2v1h-2zM623 529h1v1h-1zM627 529h1v1h-1zM629 529h452v1h-452zM1082 529h1v1h-1zM1084 529h5v1h-5zM1090 529h3v1h-3zM1094 529h1v1h-1zM622 530h1v1h-1zM625 530h1v1h-1zM627 530h6v1h-6zM634 530h10v1h-10zM645 530h427v1h-427zM1073 530h3v1h-3zM1077 530h7v1h-7zM1086 530h2v1h-2zM1089 530h2v1h-2zM626 531h1v1h-1zM628 531h2v1h-2zM631 531h3v1h-3zM635 531h449v1h-449zM1087 531h1v1h-1zM1089 531h3v1h-3zM1094 531h1v1h-1zM624 532h1v1h-1zM627 532h2v1h-2zM631 532h2v1h-2zM634 532h449v1h-449zM1084 532h1v1h-1zM1086 532h4v1h-4zM1091 532h1v1h-1zM1095 532h1v1h-1zM621 533h2v1h-2zM624 533h3v1h-3zM628 533h2v1h-2zM632 533h1v1h-1zM634 533h12v1h-12zM647 533h435v1h-435zM1083 533h7v1h-7zM1092 533h1v1h-1zM1096 533h1v1h-1zM620 534h1v1h-1zM626 534h5v1h-5zM632 534h7v1h-7zM640 534h446v1h-446zM1087 534h7v1h-7zM1095 534h2v1h-2zM1098 534h1v1h-1zM619 535h1v1h-1zM625 535h2v1h-2zM628 535h30v1h-30zM659 535h427v1h-427zM1088 535h1v1h-1zM1090 535h1v1h-1zM1092 535h1v1h-1zM1094 535h2v1h-2zM625 536h3v1h-3zM630 536h3v1h-3zM634 536h3v1h-3zM638 536h436v1h-436zM1075 536h5v1h-5zM1081 536h11v1h-11zM1095 536h1v1h-1zM1099 536h4v1h-4zM623 537h5v1h-5zM629 537h4v1h-4zM634 537h337v1h-337zM972 537h101v1h-101zM1074 537h14v1h-14zM1090 537h1v1h-1zM1093 537h1v1h-1zM1095 537h2v1h-2zM628 538h408v1h-408zM1037 538h47v1h-47zM1086 538h2v1h-2zM1091 538h3v1h-3zM1096 538h1v1h-1zM622 539h1v1h-1zM624 539h1v1h-1zM629 539h443v1h-443zM1074 539h14v1h-14zM1089 539h1v1h-1zM1091 539h6v1h-6zM1101 539h1v1h-1zM624 540h4v1h-4zM630 540h2v1h-2zM633 540h346v1h-346zM980 540h106v1h-106zM1087 540h1v1h-1zM1089 540h3v1h-3zM1094 540h1v1h-1zM1096 540h2v1h-2zM1099 540h1v1h-1zM624 541h454v1h-454zM1079 541h6v1h-6zM1086 541h5v1h-5zM1094 541h5v1h-5zM1101 541h1v1h-1zM626 542h4v1h-4zM631 542h5v1h-5zM637 542h456v1h-456zM1095 542h1v1h-1zM1098 542h2v1h-2zM1101 542h1v1h-1zM621 543h1v1h-1zM625 543h1v1h-1zM628 543h451v1h-451zM1081 543h3v1h-3zM1085 543h3v1h-3zM1089 543h7v1h-7zM1098 543h1v1h-1zM621 544h2v1h-2zM625 544h3v1h-3zM629 544h1v1h-1zM631 544h1v1h-1zM633 544h445v1h-445zM1079 544h4v1h-4zM1084 544h5v1h-5zM1091 544h3v1h-3zM1095 544h2v1h-2zM1101 544h1v1h-1zM623 545h1v1h-1zM626 545h1v1h-1zM630 545h456v1h-456zM1087 545h6v1h-6zM1094 545h3v1h-3zM1103 545h1v1h-1zM620 546h4v1h-4zM625 546h2v1h-2zM629 546h83v1h-83zM713 546h368v1h-368zM1082 546h7v1h-7zM1091 546h2v1h-2zM1094 546h1v1h-1zM1097 546h1v1h-1zM1101 546h1v1h-1zM626 547h1v1h-1zM628 547h12v1h-12zM641 547h446v1h-446zM1089 547h1v1h-1zM1091 547h3v1h-3zM1095 547h1v1h-1zM1097 547h2v1h-2zM618 548h1v1h-1zM621 548h1v1h-1zM623 548h3v1h-3zM627 548h465v1h-465zM1094 548h1v1h-1zM1097 548h4v1h-4zM1102 548h1v1h-1zM1104 548h1v1h-1zM625 549h1v1h-1zM628 549h3v1h-3zM632 549h129v1h-129zM762 549h327v1h-327zM1096 549h1v1h-1zM1101 549h1v1h-1zM620 550h1v1h-1zM623 550h1v1h-1zM625 550h1v1h-1zM629 550h463v1h-463zM1096 550h1v1h-1zM1099 550h2v1h-2zM620 551h1v1h-1zM622 551h2v1h-2zM627 551h2v1h-2zM630 551h1v1h-1zM632 551h17v1h-17zM650 551h441v1h-441zM1093 551h2v1h-2zM1096 551h1v1h-1zM1098 551h1v1h-1zM1100 551h1v1h-1zM626 552h1v1h-1zM629 552h456v1h-456zM1087 552h1v1h-1zM1089 552h1v1h-1zM1092 552h4v1h-4zM1098 552h3v1h-3zM619 553h1v1h-1zM626 553h1v1h-1zM628 553h1v1h-1zM630 553h147v1h-147zM778 553h275v1h-275zM1054 553h32v1h-32zM1087 553h1v1h-1zM1089 553h2v1h-2zM1092 553h1v1h-1zM1094 553h3v1h-3zM1104 553h1v1h-1zM626 554h5v1h-5zM632 554h340v1h-340zM973 554h96v1h-96zM1070 554h11v1h-11zM1082 554h8v1h-8zM1092 554h4v1h-4zM1097 554h1v1h-1zM624 555h1v1h-1zM626 555h1v1h-1zM628 555h5v1h-5zM634 555h65v1h-65zM700 555h384v1h-384zM1085 555h1v1h-1zM1088 555h2v1h-2zM1091 555h4v1h-4zM1098 555h1v1h-1zM627 556h460v1h-460zM1089 556h5v1h-5zM1096 556h2v1h-2zM621 557h2v1h-2zM626 557h3v1h-3zM631 557h4v1h-4zM636 557h229v1h-229zM866 557h203v1h-203zM1070 557h8v1h-8zM1079 557h4v1h-4zM1084 557h2v1h-2zM1087 557h3v1h-3zM1091 557h1v1h-1zM1093 557h4v1h-4zM1101 557h1v1h-1zM623 558h2v1h-2zM628 558h2v1h-2zM631 558h209v1h-209zM841 558h206v1h-206zM1048 558h41v1h-41zM1090 558h5v1h-5zM1096 558h1v1h-1zM1104 558h1v1h-1zM620 559h1v1h-1zM622 559h4v1h-4zM627 559h2v1h-2zM630 559h358v1h-358zM989 559h100v1h-100zM1090 559h4v1h-4zM1095 559h1v1h-1zM621 560h1v1h-1zM626 560h1v1h-1zM629 560h448v1h-448zM1078 560h10v1h-10zM1089 560h2v1h-2zM1094 560h6v1h-6zM1103 560h1v1h-1zM617 561h2v1h-2zM621 561h1v1h-1zM623 561h2v1h-2zM627 561h7v1h-7zM635 561h445v1h-445zM1081 561h5v1h-5zM1087 561h2v1h-2zM1090 561h4v1h-4zM1096 561h2v1h-2zM1100 561h1v1h-1zM622 562h1v1h-1zM627 562h1v1h-1zM629 562h16v1h-16zM646 562h327v1h-327zM974 562h83v1h-83zM1058 562h15v1h-15zM1074 562h16v1h-16zM1092 562h1v1h-1zM1094 562h1v1h-1zM1099 562h2v1h-2zM1102 562h2v1h-2zM620 563h1v1h-1zM622 563h1v1h-1zM626 563h1v1h-1zM628 563h442v1h-442zM1071 563h9v1h-9zM1081 563h5v1h-5zM1087 563h7v1h-7zM1096 563h1v1h-1zM1099 563h1v1h-1zM621 564h1v1h-1zM623 564h3v1h-3zM627 564h254v1h-254zM882 564h207v1h-207zM1097 564h2v1h-2zM1101 564h2v1h-2zM619 565h1v1h-1zM621 565h1v1h-1zM624 565h3v1h-3zM629 565h460v1h-460zM1092 565h1v1h-1zM1094 565h1v1h-1zM1096 565h1v1h-1zM1098 565h1v1h-1zM619 566h2v1h-2zM622 566h1v1h-1zM625 566h2v1h-2zM628 566h421v1h-421zM1050 566h11v1h-11zM1062 566h14v1h-14zM1077 566h5v1h-5zM1083 566h2v1h-2zM1088 566h2v1h-2zM1091 566h3v1h-3zM1095 566h2v1h-2zM1098 566h1v1h-1zM1104 566h1v1h-1zM620 567h3v1h-3zM625 567h459v1h-459zM1085 567h2v1h-2zM1088 567h2v1h-2zM1099 567h1v1h-1zM1101 567h1v1h-1zM619 568h2v1h-2zM622 568h3v1h-3zM626 568h4v1h-4zM631 568h452v1h-452zM1084 568h2v1h-2zM1087 568h1v1h-1zM1089 568h3v1h-3zM1094 568h1v1h-1zM1099 568h1v1h-1zM620 569h1v1h-1zM622 569h3v1h-3zM626 569h2v1h-2zM629 569h441v1h-441zM1071 569h4v1h-4zM1076 569h2v1h-2zM1081 569h4v1h-4zM1086 569h3v1h-3zM1092 569h1v1h-1zM1099 569h1v1h-1zM618 570h1v1h-1zM621 570h2v1h-2zM625 570h4v1h-4zM631 570h426v1h-426zM1058 570h20v1h-20zM1079 570h1v1h-1zM1082 570h5v1h-5zM1089 570h1v1h-1zM1091 570h2v1h-2zM1101 570h1v1h-1zM623 571h1v1h-1zM627 571h2v1h-2zM630 571h447v1h-447zM1078 571h2v1h-2zM1081 571h2v1h-2zM1085 571h1v1h-1zM1087 571h1v1h-1zM1089 571h1v1h-1zM1092 571h1v1h-1zM1096 571h1v1h-1zM619 572h1v1h-1zM624 572h1v1h-1zM627 572h7v1h-7zM635 572h438v1h-438zM1074 572h1v1h-1zM1076 572h2v1h-2zM1081 572h5v1h-5zM1087 572h1v1h-1zM1091 572h1v1h-1zM1094 572h1v1h-1zM1097 572h1v1h-1zM618 573h4v1h-4zM625 573h1v1h-1zM627 573h92v1h-92zM720 573h110v1h-110zM831 573h234v1h-234zM1066 573h3v1h-3zM1070 573h8v1h-8zM1079 573h1v1h-1zM1081 573h2v1h-2zM1084 573h2v1h-2zM1087 573h2v1h-2zM1090 573h1v1h-1zM619 574h1v1h-1zM623 574h1v1h-1zM627 574h2v1h-2zM630 574h6v1h-6zM637 574h4v1h-4zM642 574h338v1h-338zM981 574h94v1h-94zM1076 574h2v1h-2zM1079 574h3v1h-3zM1084 574h8v1h-8zM622 575h1v1h-1zM624 575h3v1h-3zM628 575h454v1h-454zM1084 575h1v1h-1zM1087 575h1v1h-1zM1091 575h1v1h-1zM1093 575h1v1h-1zM1095 575h1v1h-1zM1099 575h1v1h-1zM621 576h2v1h-2zM624 576h5v1h-5zM630 576h9v1h-9zM640 576h436v1h-436zM1077 576h4v1h-4zM1082 576h1v1h-1zM1084 576h1v1h-1zM620 577h1v1h-1zM623 577h2v1h-2zM626 577h3v1h-3zM630 577h1v1h-1zM632 577h428v1h-428zM1061 577h22v1h-22zM1085 577h3v1h-3zM1090 577h1v1h-1zM1094 577h1v1h-1zM622 578h1v1h-1zM624 578h1v1h-1zM626 578h1v1h-1zM629 578h448v1h-448zM1079 578h2v1h-2zM1082 578h1v1h-1zM1084 578h1v1h-1zM1087 578h1v1h-1zM1095 578h1v1h-1zM618 579h1v1h-1zM623 579h6v1h-6zM630 579h423v1h-423zM1054 579h12v1h-12zM1068 579h3v1h-3zM1072 579h5v1h-5zM1078 579h6v1h-6zM1088 579h2v1h-2zM1094 579h1v1h-1zM621 580h2v1h-2zM625 580h3v1h-3zM631 580h363v1h-363zM995 580h70v1h-70zM1066 580h10v1h-10zM1077 580h3v1h-3zM1082 580h1v1h-1zM1086 580h2v1h-2zM1090 580h1v1h-1zM1094 580h1v1h-1zM1096 580h1v1h-1zM622 581h1v1h-1zM624 581h1v1h-1zM626 581h1v1h-1zM629 581h435v1h-435zM1065 581h14v1h-14zM1081 581h1v1h-1zM1083 581h2v1h-2zM1087 581h1v1h-1zM622 582h1v1h-1zM626 582h1v1h-1zM630 582h112v1h-112zM743 582h315v1h-315zM1059 582h8v1h-8zM1068 582h10v1h-10zM1079 582h3v1h-3zM1085 582h3v1h-3zM621 583h3v1h-3zM625 583h2v1h-2zM629 583h350v1h-350zM980 583h63v1h-63zM1044 583h21v1h-21zM1066 583h1v1h-1zM1068 583h4v1h-4zM1074 583h6v1h-6zM1082 583h1v1h-1zM1084 583h3v1h-3zM1089 583h1v1h-1zM619 584h1v1h-1zM625 584h1v1h-1zM628 584h8v1h-8zM637 584h265v1h-265zM903 584h14v1h-14zM918 584h123v1h-123zM1042 584h18v1h-18zM1061 584h10v1h-10zM1072 584h3v1h-3zM1076 584h2v1h-2zM1081 584h1v1h-1zM1083 584h1v1h-1zM1088 584h1v1h-1zM622 585h1v1h-1zM624 585h1v1h-1zM626 585h2v1h-2zM630 585h1v1h-1zM632 585h426v1h-426zM1059 585h1v1h-1zM1061 585h3v1h-3zM1065 585h5v1h-5zM1071 585h3v1h-3zM1075 585h1v1h-1zM1077 585h3v1h-3zM1081 585h4v1h-4zM1088 585h1v1h-1zM625 586h1v1h-1zM627 586h433v1h-433zM1061 586h3v1h-3zM1065 586h1v1h-1zM1067 586h1v1h-1zM1069 586h2v1h-2zM1073 586h2v1h-2zM1076 586h1v1h-1zM1079 586h1v1h-1zM1081 586h3v1h-3zM624 587h1v1h-1zM627 587h5v1h-5zM633 587h1v1h-1zM635 587h278v1h-278zM914 587h148v1h-148zM1063 587h7v1h-7zM1071 587h1v1h-1zM1077 587h2v1h-2zM1080 587h1v1h-1zM1082 587h1v1h-1zM1084 587h1v1h-1zM1093 587h1v1h-1zM622 588h1v1h-1zM629 588h406v1h-406zM1036 588h19v1h-19zM1056 588h10v1h-10zM1067 588h3v1h-3zM1071 588h1v1h-1zM1073 588h1v1h-1zM1075 588h1v1h-1zM1081 588h1v1h-1zM1083 588h1v1h-1zM1087 588h1v1h-1zM625 589h1v1h-1zM627 589h1v1h-1zM631 589h1v1h-1zM633 589h18v1h-18zM652 589h85v1h-85zM738 589h6v1h-6zM745 589h141v1h-141zM887 589h171v1h-171zM1059 589h3v1h-3zM1063 589h2v1h-2zM1066 589h2v1h-2zM1070 589h1v1h-1zM1073 589h1v1h-1zM1075 589h3v1h-3zM1079 589h1v1h-1zM1081 589h1v1h-1zM1088 589h1v1h-1zM626 590h1v1h-1zM629 590h2v1h-2zM632 590h1v1h-1zM634 590h9v1h-9zM644 590h11v1h-11zM656 590h366v1h-366zM1023 590h26v1h-26zM1050 590h5v1h-5zM1056 590h6v1h-6zM1063 590h7v1h-7zM1073 590h1v1h-1zM1075 590h1v1h-1zM1078 590h1v1h-1zM1080 590h4v1h-4zM1092 590h1v1h-1zM620 591h1v1h-1zM624 591h1v1h-1zM627 591h27v1h-27zM655 591h385v1h-385zM1041 591h18v1h-18zM1061 591h1v1h-1zM1063 591h1v1h-1zM1065 591h3v1h-3zM1069 591h1v1h-1zM1071 591h2v1h-2zM1074 591h1v1h-1zM1078 591h1v1h-1zM1080 591h1v1h-1zM1082 591h1v1h-1zM1086 591h1v1h-1zM1088 591h1v1h-1zM626 592h3v1h-3zM631 592h1v1h-1zM633 592h325v1h-325zM959 592h103v1h-103zM1064 592h3v1h-3zM1068 592h6v1h-6zM1075 592h1v1h-1zM1080 592h2v1h-2zM1088 592h1v1h-1zM624 593h1v1h-1zM626 593h1v1h-1zM628 593h4v1h-4zM633 593h3v1h-3zM637 593h6v1h-6zM644 593h411v1h-411zM1056 593h13v1h-13zM1070 593h3v1h-3zM1075 593h1v1h-1zM1077 593h1v1h-1zM1080 593h2v1h-2zM1083 593h1v1h-1zM1085 593h1v1h-1zM624 594h1v1h-1zM626 594h2v1h-2zM630 594h422v1h-422zM1053 594h6v1h-6zM1060 594h2v1h-2zM1064 594h4v1h-4zM1069 594h2v1h-2zM1072 594h1v1h-1zM1076 594h1v1h-1zM1079 594h1v1h-1zM1081 594h1v1h-1zM1084 594h1v1h-1zM625 595h1v1h-1zM631 595h2v1h-2zM635 595h125v1h-125zM761 595h276v1h-276zM1038 595h9v1h-9zM1048 595h10v1h-10zM1059 595h5v1h-5zM1065 595h1v1h-1zM1067 595h2v1h-2zM1070 595h1v1h-1zM1072 595h1v1h-1zM1076 595h1v1h-1zM1080 595h1v1h-1zM1082 595h1v1h-1zM624 596h1v1h-1zM626 596h2v1h-2zM629 596h2v1h-2zM632 596h244v1h-244zM877 596h175v1h-175zM1053 596h2v1h-2zM1057 596h7v1h-7zM1065 596h1v1h-1zM1067 596h1v1h-1zM1075 596h1v1h-1zM1085 596h1v1h-1zM628 597h1v1h-1zM630 597h2v1h-2zM633 597h2v1h-2zM636 597h290v1h-290zM927 597h30v1h-30zM958 597h76v1h-76zM1036 597h7v1h-7zM1044 597h5v1h-5zM1050 597h10v1h-10zM1061 597h3v1h-3zM1068 597h1v1h-1zM1070 597h1v1h-1zM1072 597h1v1h-1zM1074 597h1v1h-1zM1078 597h1v1h-1zM1080 597h2v1h-2zM1084 597h1v1h-1zM625 598h2v1h-2zM628 598h1v1h-1zM630 598h1v1h-1zM632 598h2v1h-2zM635 598h421v1h-421zM1059 598h1v1h-1zM1061 598h3v1h-3zM1065 598h2v1h-2zM1069 598h1v1h-1zM1072 598h1v1h-1zM1075 598h1v1h-1zM1078 598h1v1h-1zM1080 598h1v1h-1zM631 599h6v1h-6zM638 599h370v1h-370zM1009 599h49v1h-49zM1059 599h3v1h-3zM1063 599h3v1h-3zM1067 599h1v1h-1zM1075 599h1v1h-1zM1080 599h1v1h-1zM629 600h1v1h-1zM631 600h2v1h-2zM636 600h4v1h-4zM641 600h185v1h-185zM827 600h35v1h-35zM863 600h188v1h-188zM1053 600h7v1h-7zM1061 600h2v1h-2zM1065 600h3v1h-3zM1070 600h1v1h-1zM1078 600h1v1h-1zM624 601h1v1h-1zM626 601h1v1h-1zM633 601h4v1h-4zM638 601h383v1h-383zM1022 601h7v1h-7zM1030 601h9v1h-9zM1040 601h23v1h-23zM1067 601h2v1h-2zM1072 601h1v1h-1zM1074 601h1v1h-1zM628 602h1v1h-1zM630 602h2v1h-2zM633 602h2v1h-2zM637 602h193v1h-193zM831 602h185v1h-185zM1017 602h25v1h-25zM1043 602h1v1h-1zM1045 602h2v1h-2zM1048 602h1v1h-1zM1050 602h1v1h-1zM1057 602h1v1h-1zM1059 602h1v1h-1zM1061 602h1v1h-1zM1064 602h1v1h-1zM1067 602h1v1h-1zM1070 602h2v1h-2zM1075 602h1v1h-1zM628 603h1v1h-1zM631 603h1v1h-1zM633 603h2v1h-2zM637 603h378v1h-378zM1016 603h3v1h-3zM1020 603h5v1h-5zM1026 603h6v1h-6zM1033 603h9v1h-9zM1043 603h3v1h-3zM1047 603h1v1h-1zM1049 603h3v1h-3zM1053 603h1v1h-1zM1055 603h2v1h-2zM1059 603h1v1h-1zM1069 603h2v1h-2zM1072 603h1v1h-1zM1079 603h1v1h-1zM629 604h1v1h-1zM634 604h413v1h-413zM1049 604h3v1h-3zM1054 604h1v1h-1zM1059 604h2v1h-2zM1065 604h1v1h-1zM627 605h1v1h-1zM631 605h2v1h-2zM634 605h4v1h-4zM639 605h24v1h-24zM664 605h320v1h-320zM985 605h3v1h-3zM989 605h5v1h-5zM995 605h36v1h-36zM1032 605h10v1h-10zM1043 605h5v1h-5zM1049 605h3v1h-3zM1054 605h2v1h-2zM1057 605h3v1h-3zM1061 605h1v1h-1zM628 606h1v1h-1zM631 606h2v1h-2zM635 606h41v1h-41zM677 606h89v1h-89zM767 606h23v1h-23zM791 606h196v1h-196zM988 606h26v1h-26zM1015 606h16v1h-16zM1032 606h7v1h-7zM1042 606h2v1h-2zM1045 606h4v1h-4zM1052 606h1v1h-1zM1054 606h2v1h-2zM1060 606h1v1h-1zM1062 606h1v1h-1zM1066 606h1v1h-1zM632 607h3v1h-3zM636 607h4v1h-4zM641 607h395v1h-395zM1039 607h1v1h-1zM1041 607h4v1h-4zM1048 607h1v1h-1zM1053 607h3v1h-3zM1059 607h1v1h-1zM1062 607h1v1h-1zM1065 607h1v1h-1zM630 608h1v1h-1zM635 608h10v1h-10zM646 608h26v1h-26zM673 608h347v1h-347zM1021 608h3v1h-3zM1025 608h8v1h-8zM1034 608h2v1h-2zM1037 608h1v1h-1zM1040 608h5v1h-5zM1046 608h1v1h-1zM1049 608h7v1h-7zM1061 608h1v1h-1zM1063 608h1v1h-1zM1068 608h1v1h-1zM628 609h1v1h-1zM631 609h1v1h-1zM633 609h1v1h-1zM635 609h4v1h-4zM640 609h387v1h-387zM1029 609h4v1h-4zM1034 609h4v1h-4zM1040 609h1v1h-1zM1044 609h2v1h-2zM1047 609h3v1h-3zM1054 609h1v1h-1zM1058 609h1v1h-1zM1066 609h1v1h-1zM632 610h1v1h-1zM634 610h2v1h-2zM637 610h1v1h-1zM639 610h331v1h-331zM971 610h49v1h-49zM1021 610h1v1h-1zM1023 610h8v1h-8zM1033 610h3v1h-3zM1037 610h1v1h-1zM1039 610h1v1h-1zM1041 610h4v1h-4zM1047 610h1v1h-1zM1049 610h3v1h-3zM1057 610h1v1h-1zM1060 610h1v1h-1zM1063 610h1v1h-1zM630 611h1v1h-1zM632 611h1v1h-1zM634 611h1v1h-1zM637 611h1v1h-1zM639 611h7v1h-7zM647 611h323v1h-323zM971 611h58v1h-58zM1030 611h3v1h-3zM1034 611h2v1h-2zM1037 611h1v1h-1zM1040 611h5v1h-5zM1049 611h1v1h-1zM1051 611h2v1h-2zM1057 611h1v1h-1zM1060 611h1v1h-1zM1062 611h1v1h-1zM634 612h1v1h-1zM636 612h2v1h-2zM640 612h1v1h-1zM642 612h350v1h-350zM993 612h35v1h-35zM1029 612h1v1h-1zM1031 612h5v1h-5zM1037 612h1v1h-1zM1040 612h2v1h-2zM1043 612h1v1h-1zM1048 612h2v1h-2zM1055 612h3v1h-3zM636 613h1v1h-1zM638 613h1v1h-1zM641 613h2v1h-2zM644 613h5v1h-5zM651 613h322v1h-322zM974 613h49v1h-49zM1025 613h5v1h-5zM1031 613h4v1h-4zM1037 613h6v1h-6zM1046 613h3v1h-3zM1051 613h1v1h-1zM631 614h1v1h-1zM635 614h1v1h-1zM638 614h1v1h-1zM642 614h1v1h-1zM644 614h5v1h-5zM650 614h250v1h-250zM901 614h126v1h-126zM1028 614h1v1h-1zM1030 614h3v1h-3zM1035 614h2v1h-2zM1038 614h1v1h-1zM1042 614h1v1h-1zM1044 614h2v1h-2zM1048 614h2v1h-2zM1055 614h1v1h-1zM632 615h1v1h-1zM634 615h1v1h-1zM636 615h1v1h-1zM638 615h1v1h-1zM640 615h1v1h-1zM642 615h370v1h-370zM1013 615h10v1h-10zM1024 615h2v1h-2zM1027 615h5v1h-5zM1033 615h1v1h-1zM1035 615h1v1h-1zM1037 615h1v1h-1zM1039 615h1v1h-1zM1041 615h2v1h-2zM1044 615h1v1h-1zM1046 615h2v1h-2zM1052 615h1v1h-1zM1055 615h1v1h-1zM637 616h1v1h-1zM639 616h1v1h-1zM641 616h56v1h-56zM698 616h279v1h-279zM978 616h15v1h-15zM994 616h30v1h-30zM1026 616h2v1h-2zM1030 616h1v1h-1zM1032 616h1v1h-1zM1034 616h1v1h-1zM1037 616h2v1h-2zM1042 616h1v1h-1zM1052 616h1v1h-1zM640 617h1v1h-1zM642 617h5v1h-5zM648 617h239v1h-239zM888 617h126v1h-126zM1015 617h3v1h-3zM1020 617h4v1h-4zM1025 617h2v1h-2zM1028 617h1v1h-1zM1031 617h2v1h-2zM1034 617h1v1h-1zM1037 617h1v1h-1zM1041 617h1v1h-1zM1045 617h1v1h-1zM636 618h1v1h-1zM639 618h3v1h-3zM643 618h1v1h-1zM645 618h295v1h-295zM941 618h23v1h-23zM965 618h50v1h-50zM1016 618h1v1h-1zM1018 618h5v1h-5zM1025 618h1v1h-1zM1028 618h2v1h-2zM1034 618h2v1h-2zM1040 618h1v1h-1zM1043 618h1v1h-1zM1045 618h1v1h-1zM1047 618h1v1h-1zM1052 618h1v1h-1zM636 619h1v1h-1zM639 619h2v1h-2zM643 619h3v1h-3zM648 619h5v1h-5zM654 619h330v1h-330zM985 619h4v1h-4zM991 619h15v1h-15zM1007 619h2v1h-2zM1010 619h2v1h-2zM1013 619h3v1h-3zM1017 619h1v1h-1zM1019 619h1v1h-1zM1021 619h2v1h-2zM1024 619h1v1h-1zM1027 619h2v1h-2zM1030 619h1v1h-1zM1033 619h1v1h-1zM1039 619h1v1h-1zM637 620h1v1h-1zM639 620h3v1h-3zM644 620h1v1h-1zM647 620h3v1h-3zM652 620h58v1h-58zM711 620h269v1h-269zM981 620h2v1h-2zM984 620h17v1h-17zM1002 620h8v1h-8zM1011 620h8v1h-8zM1020 620h1v1h-1zM1022 620h1v1h-1zM1024 620h1v1h-1zM1029 620h2v1h-2zM1032 620h2v1h-2zM1036 620h1v1h-1zM1038 620h3v1h-3zM638 621h1v1h-1zM640 621h1v1h-1zM642 621h2v1h-2zM645 621h1v1h-1zM648 621h2v1h-2zM651 621h19v1h-19zM671 621h186v1h-186zM858 621h94v1h-94zM953 621h14v1h-14zM968 621h34v1h-34zM1005 621h9v1h-9zM1015 621h2v1h-2zM1019 621h1v1h-1zM1021 621h1v1h-1zM1023 621h1v1h-1zM1027 621h1v1h-1zM1032 621h6v1h-6zM1040 621h1v1h-1zM1044 621h2v1h-2zM642 622h3v1h-3zM646 622h1v1h-1zM648 622h6v1h-6zM655 622h4v1h-4zM660 622h317v1h-317zM978 622h23v1h-23zM1002 622h1v1h-1zM1004 622h2v1h-2zM1007 622h5v1h-5zM1013 622h4v1h-4zM1020 622h4v1h-4zM1026 622h1v1h-1zM1031 622h1v1h-1zM1036 622h2v1h-2zM1039 622h1v1h-1zM641 623h1v1h-1zM644 623h2v1h-2zM647 623h2v1h-2zM650 623h1v1h-1zM653 623h5v1h-5zM659 623h228v1h-228zM888 623h86v1h-86zM975 623h16v1h-16zM992 623h2v1h-2zM996 623h5v1h-5zM1004 623h3v1h-3zM1009 623h3v1h-3zM1017 623h2v1h-2zM1020 623h1v1h-1zM1022 623h3v1h-3zM1030 623h1v1h-1zM1034 623h1v1h-1zM644 624h4v1h-4zM650 624h1v1h-1zM652 624h10v1h-10zM663 624h180v1h-180zM844 624h141v1h-141zM986 624h7v1h-7zM994 624h1v1h-1zM998 624h2v1h-2zM1001 624h3v1h-3zM1007 624h3v1h-3zM1011 624h1v1h-1zM1015 624h1v1h-1zM1017 624h2v1h-2zM1021 624h1v1h-1zM1023 624h1v1h-1zM1027 624h1v1h-1zM1029 624h1v1h-1zM1032 624h1v1h-1zM644 625h2v1h-2zM647 625h3v1h-3zM652 625h310v1h-310zM963 625h18v1h-18zM982 625h3v1h-3zM986 625h7v1h-7zM997 625h7v1h-7zM1009 625h1v1h-1zM1011 625h2v1h-2zM1014 625h1v1h-1zM1017 625h1v1h-1zM1019 625h2v1h-2zM1022 625h1v1h-1zM1026 625h1v1h-1zM1031 625h1v1h-1zM646 626h1v1h-1zM648 626h1v1h-1zM654 626h190v1h-190zM845 626h114v1h-114zM960 626h18v1h-18zM979 626h9v1h-9zM989 626h3v1h-3zM993 626h3v1h-3zM998 626h1v1h-1zM1003 626h3v1h-3zM1007 626h2v1h-2zM1010 626h3v1h-3zM1014 626h1v1h-1zM1016 626h5v1h-5zM1022 626h1v1h-1zM647 627h3v1h-3zM651 627h3v1h-3zM656 627h1v1h-1zM658 627h173v1h-173zM832 627h106v1h-106zM939 627h5v1h-5zM945 627h18v1h-18zM964 627h17v1h-17zM982 627h10v1h-10zM993 627h5v1h-5zM999 627h3v1h-3zM1004 627h2v1h-2zM1008 627h4v1h-4zM1013 627h1v1h-1zM1015 627h1v1h-1zM1033 627h1v1h-1zM645 628h1v1h-1zM649 628h2v1h-2zM653 628h2v1h-2zM656 628h1v1h-1zM658 628h1v1h-1zM660 628h168v1h-168zM829 628h69v1h-69zM899 628h42v1h-42zM942 628h22v1h-22zM965 628h7v1h-7zM973 628h15v1h-15zM991 628h2v1h-2zM995 628h1v1h-1zM998 628h2v1h-2zM1001 628h2v1h-2zM1004 628h5v1h-5zM1011 628h1v1h-1zM1013 628h1v1h-1zM1016 628h1v1h-1zM646 629h1v1h-1zM648 629h1v1h-1zM650 629h2v1h-2zM656 629h1v1h-1zM658 629h274v1h-274zM933 629h29v1h-29zM963 629h10v1h-10zM974 629h4v1h-4zM979 629h1v1h-1zM981 629h3v1h-3zM985 629h1v1h-1zM987 629h4v1h-4zM994 629h1v1h-1zM996 629h4v1h-4zM1001 629h5v1h-5zM1008 629h1v1h-1zM1015 629h2v1h-2zM1019 629h1v1h-1zM1021 629h1v1h-1zM1023 629h1v1h-1zM1025 629h1v1h-1zM647 630h1v1h-1zM649 630h1v1h-1zM652 630h1v1h-1zM654 630h1v1h-1zM656 630h2v1h-2zM659 630h318v1h-318zM978 630h3v1h-3zM982 630h3v1h-3zM986 630h4v1h-4zM991 630h3v1h-3zM995 630h4v1h-4zM1000 630h5v1h-5zM1007 630h3v1h-3zM1012 630h1v1h-1zM651 631h1v1h-1zM654 631h6v1h-6zM662 631h269v1h-269zM932 631h8v1h-8zM941 631h35v1h-35zM977 631h2v1h-2zM980 631h6v1h-6zM987 631h5v1h-5zM994 631h3v1h-3zM998 631h1v1h-1zM1003 631h1v1h-1zM1008 631h3v1h-3zM1016 631h1v1h-1zM1019 631h1v1h-1zM647 632h1v1h-1zM649 632h1v1h-1zM652 632h1v1h-1zM654 632h2v1h-2zM657 632h2v1h-2zM660 632h6v1h-6zM667 632h185v1h-185zM853 632h20v1h-20zM874 632h17v1h-17zM892 632h11v1h-11zM904 632h29v1h-29zM934 632h1v1h-1zM936 632h31v1h-31zM968 632h2v1h-2zM971 632h3v1h-3zM976 632h1v1h-1zM978 632h1v1h-1zM982 632h1v1h-1zM984 632h1v1h-1zM988 632h1v1h-1zM991 632h1v1h-1zM994 632h2v1h-2zM997 632h1v1h-1zM999 632h1v1h-1zM1002 632h1v1h-1zM1004 632h1v1h-1zM1007 632h1v1h-1zM1011 632h1v1h-1zM649 633h1v1h-1zM652 633h2v1h-2zM656 633h1v1h-1zM659 633h2v1h-2zM662 633h1v1h-1zM664 633h3v1h-3zM668 633h197v1h-197zM866 633h54v1h-54zM921 633h16v1h-16zM938 633h32v1h-32zM971 633h1v1h-1zM973 633h2v1h-2zM977 633h2v1h-2zM980 633h2v1h-2zM984 633h1v1h-1zM986 633h2v1h-2zM989 633h2v1h-2zM997 633h2v1h-2zM1003 633h1v1h-1zM1008 633h1v1h-1zM1013 633h1v1h-1zM654 634h1v1h-1zM658 634h1v1h-1zM662 634h160v1h-160zM823 634h118v1h-118zM942 634h26v1h-26zM969 634h4v1h-4zM974 634h1v1h-1zM976 634h9v1h-9zM986 634h1v1h-1zM989 634h1v1h-1zM994 634h3v1h-3zM1003 634h1v1h-1zM1013 634h1v1h-1zM653 635h1v1h-1zM658 635h1v1h-1zM660 635h1v1h-1zM662 635h143v1h-143zM806 635h33v1h-33zM840 635h50v1h-50zM891 635h33v1h-33zM925 635h14v1h-14zM940 635h6v1h-6zM947 635h9v1h-9zM957 635h3v1h-3zM961 635h4v1h-4zM966 635h1v1h-1zM968 635h3v1h-3zM973 635h6v1h-6zM980 635h1v1h-1zM982 635h1v1h-1zM984 635h2v1h-2zM988 635h2v1h-2zM991 635h1v1h-1zM993 635h1v1h-1zM996 635h1v1h-1zM999 635h1v1h-1zM1001 635h1v1h-1zM1003 635h1v1h-1zM1008 635h1v1h-1zM655 636h1v1h-1zM659 636h1v1h-1zM661 636h1v1h-1zM663 636h19v1h-19zM683 636h160v1h-160zM844 636h5v1h-5zM850 636h4v1h-4zM855 636h4v1h-4zM860 636h9v1h-9zM870 636h11v1h-11zM882 636h11v1h-11zM894 636h4v1h-4zM899 636h43v1h-43zM943 636h5v1h-5zM949 636h9v1h-9zM961 636h5v1h-5zM968 636h1v1h-1zM971 636h1v1h-1zM973 636h1v1h-1zM975 636h3v1h-3zM981 636h2v1h-2zM984 636h3v1h-3zM991 636h1v1h-1zM993 636h2v1h-2zM996 636h1v1h-1zM1002 636h1v1h-1zM1004 636h3v1h-3zM656 637h1v1h-1zM658 637h3v1h-3zM662 637h1v1h-1zM665 637h4v1h-4zM670 637h17v1h-17zM688 637h172v1h-172zM861 637h82v1h-82zM944 637h14v1h-14zM960 637h5v1h-5zM966 637h9v1h-9zM977 637h2v1h-2zM980 637h1v1h-1zM984 637h2v1h-2zM988 637h1v1h-1zM990 637h3v1h-3zM997 637h1v1h-1zM1006 637h1v1h-1zM1008 637h1v1h-1zM657 638h1v1h-1zM659 638h1v1h-1zM661 638h2v1h-2zM665 638h4v1h-4zM670 638h144v1h-144zM815 638h14v1h-14zM830 638h16v1h-16zM847 638h15v1h-15zM863 638h3v1h-3zM867 638h27v1h-27zM895 638h12v1h-12zM908 638h18v1h-18zM927 638h1v1h-1zM929 638h1v1h-1zM931 638h32v1h-32zM964 638h2v1h-2zM967 638h4v1h-4zM972 638h2v1h-2zM975 638h8v1h-8zM984 638h3v1h-3zM988 638h1v1h-1zM991 638h1v1h-1zM994 638h3v1h-3zM1001 638h1v1h-1zM1004 638h1v1h-1zM657 639h1v1h-1zM660 639h1v1h-1zM663 639h1v1h-1zM665 639h8v1h-8zM674 639h5v1h-5zM680 639h1v1h-1zM682 639h173v1h-173zM856 639h16v1h-16zM873 639h20v1h-20zM894 639h5v1h-5zM900 639h22v1h-22zM923 639h11v1h-11zM935 639h11v1h-11zM948 639h9v1h-9zM958 639h8v1h-8zM970 639h2v1h-2zM976 639h1v1h-1zM978 639h2v1h-2zM982 639h5v1h-5zM989 639h3v1h-3zM993 639h1v1h-1zM659 640h1v1h-1zM663 640h2v1h-2zM669 640h2v1h-2zM672 640h149v1h-149zM822 640h26v1h-26zM849 640h13v1h-13zM863 640h21v1h-21zM885 640h28v1h-28zM914 640h36v1h-36zM951 640h2v1h-2zM954 640h2v1h-2zM957 640h3v1h-3zM961 640h1v1h-1zM964 640h1v1h-1zM968 640h4v1h-4zM973 640h3v1h-3zM980 640h2v1h-2zM984 640h1v1h-1zM987 640h2v1h-2zM990 640h3v1h-3zM665 641h1v1h-1zM667 641h1v1h-1zM670 641h3v1h-3zM674 641h58v1h-58zM733 641h91v1h-91zM825 641h8v1h-8zM834 641h56v1h-56zM891 641h1v1h-1zM893 641h5v1h-5zM899 641h5v1h-5zM905 641h7v1h-7zM913 641h15v1h-15zM930 641h5v1h-5zM936 641h4v1h-4zM941 641h2v1h-2zM944 641h3v1h-3zM949 641h12v1h-12zM962 641h3v1h-3zM968 641h3v1h-3zM972 641h1v1h-1zM974 641h2v1h-2zM977 641h1v1h-1zM979 641h1v1h-1zM983 641h2v1h-2zM986 641h1v1h-1zM990 641h1v1h-1zM995 641h2v1h-2zM664 642h1v1h-1zM669 642h1v1h-1zM671 642h3v1h-3zM675 642h8v1h-8zM684 642h3v1h-3zM688 642h120v1h-120zM809 642h31v1h-31zM841 642h10v1h-10zM852 642h23v1h-23zM876 642h15v1h-15zM892 642h1v1h-1zM894 642h5v1h-5zM900 642h1v1h-1zM903 642h9v1h-9zM913 642h2v1h-2zM916 642h1v1h-1zM918 642h6v1h-6zM925 642h5v1h-5zM931 642h3v1h-3zM936 642h2v1h-2zM940 642h6v1h-6zM948 642h2v1h-2zM952 642h2v1h-2zM955 642h2v1h-2zM958 642h3v1h-3zM962 642h1v1h-1zM965 642h6v1h-6zM972 642h1v1h-1zM975 642h1v1h-1zM979 642h1v1h-1zM982 642h2v1h-2zM987 642h1v1h-1zM992 642h1v1h-1zM996 642h1v1h-1zM666 643h1v1h-1zM670 643h1v1h-1zM672 643h6v1h-6zM679 643h17v1h-17zM697 643h106v1h-106zM804 643h18v1h-18zM823 643h12v1h-12zM836 643h1v1h-1zM838 643h12v1h-12zM851 643h6v1h-6zM859 643h1v1h-1zM861 643h2v1h-2zM864 643h15v1h-15zM880 643h2v1h-2zM883 643h15v1h-15zM899 643h6v1h-6zM907 643h4v1h-4zM912 643h6v1h-6zM920 643h16v1h-16zM938 643h1v1h-1zM940 643h1v1h-1zM942 643h1v1h-1zM944 643h7v1h-7zM953 643h1v1h-1zM956 643h4v1h-4zM961 643h1v1h-1zM963 643h2v1h-2zM975 643h2v1h-2zM980 643h3v1h-3zM987 643h2v1h-2zM669 644h1v1h-1zM674 644h5v1h-5zM680 644h3v1h-3zM684 644h5v1h-5zM690 644h23v1h-23zM714 644h98v1h-98zM813 644h2v1h-2zM816 644h16v1h-16zM833 644h19v1h-19zM853 644h2v1h-2zM856 644h8v1h-8zM865 644h9v1h-9zM875 644h2v1h-2zM879 644h5v1h-5zM885 644h10v1h-10zM897 644h3v1h-3zM901 644h1v1h-1zM904 644h2v1h-2zM909 644h4v1h-4zM914 644h1v1h-1zM917 644h2v1h-2zM920 644h1v1h-1zM923 644h7v1h-7zM931 644h1v1h-1zM934 644h1v1h-1zM936 644h3v1h-3zM941 644h2v1h-2zM944 644h1v1h-1zM946 644h4v1h-4zM952 644h3v1h-3zM956 644h2v1h-2zM959 644h1v1h-1zM961 644h1v1h-1zM963 644h2v1h-2zM968 644h1v1h-1zM970 644h3v1h-3zM987 644h1v1h-1zM670 645h1v1h-1zM672 645h1v1h-1zM675 645h105v1h-105zM781 645h5v1h-5zM787 645h27v1h-27zM815 645h32v1h-32zM848 645h7v1h-7zM856 645h3v1h-3zM860 645h1v1h-1zM862 645h4v1h-4zM867 645h1v1h-1zM869 645h2v1h-2zM872 645h1v1h-1zM876 645h2v1h-2zM879 645h4v1h-4zM884 645h2v1h-2zM888 645h1v1h-1zM890 645h1v1h-1zM892 645h1v1h-1zM894 645h3v1h-3zM899 645h2v1h-2zM902 645h1v1h-1zM904 645h2v1h-2zM907 645h1v1h-1zM913 645h5v1h-5zM919 645h3v1h-3zM923 645h2v1h-2zM928 645h4v1h-4zM933 645h1v1h-1zM937 645h1v1h-1zM940 645h1v1h-1zM942 645h1v1h-1zM945 645h1v1h-1zM950 645h1v1h-1zM952 645h1v1h-1zM954 645h3v1h-3zM958 645h3v1h-3zM963 645h1v1h-1zM965 645h1v1h-1zM967 645h1v1h-1zM985 645h1v1h-1zM664 646h1v1h-1zM667 646h2v1h-2zM674 646h31v1h-31zM706 646h101v1h-101zM808 646h20v1h-20zM829 646h1v1h-1zM831 646h3v1h-3zM835 646h7v1h-7zM843 646h1v1h-1zM845 646h5v1h-5zM851 646h2v1h-2zM855 646h5v1h-5zM862 646h3v1h-3zM866 646h8v1h-8zM876 646h1v1h-1zM881 646h2v1h-2zM885 646h3v1h-3zM889 646h1v1h-1zM891 646h8v1h-8zM900 646h4v1h-4zM905 646h4v1h-4zM910 646h2v1h-2zM913 646h1v1h-1zM915 646h1v1h-1zM917 646h1v1h-1zM921 646h1v1h-1zM923 646h4v1h-4zM932 646h1v1h-1zM935 646h2v1h-2zM943 646h4v1h-4zM949 646h4v1h-4zM955 646h1v1h-1zM959 646h1v1h-1zM964 646h1v1h-1zM968 646h2v1h-2zM974 646h1v1h-1zM980 646h1v1h-1zM667 647h3v1h-3zM674 647h4v1h-4zM679 647h4v1h-4zM685 647h7v1h-7zM693 647h29v1h-29zM723 647h90v1h-90zM815 647h23v1h-23zM839 647h12v1h-12zM852 647h1v1h-1zM854 647h8v1h-8zM863 647h3v1h-3zM867 647h13v1h-13zM881 647h5v1h-5zM887 647h1v1h-1zM889 647h2v1h-2zM892 647h1v1h-1zM894 647h5v1h-5zM900 647h7v1h-7zM909 647h1v1h-1zM912 647h2v1h-2zM915 647h1v1h-1zM917 647h2v1h-2zM922 647h2v1h-2zM925 647h2v1h-2zM928 647h2v1h-2zM932 647h1v1h-1zM934 647h1v1h-1zM936 647h7v1h-7zM944 647h4v1h-4zM950 647h3v1h-3zM955 647h1v1h-1zM959 647h1v1h-1zM961 647h1v1h-1zM964 647h1v1h-1zM969 647h1v1h-1zM667 648h1v1h-1zM671 648h1v1h-1zM674 648h2v1h-2zM677 648h1v1h-1zM681 648h1v1h-1zM683 648h7v1h-7zM691 648h14v1h-14zM706 648h21v1h-21zM728 648h5v1h-5zM734 648h8v1h-8zM743 648h13v1h-13zM757 648h4v1h-4zM762 648h28v1h-28zM791 648h10v1h-10zM802 648h3v1h-3zM806 648h19v1h-19zM826 648h13v1h-13zM840 648h1v1h-1zM842 648h2v1h-2zM846 648h4v1h-4zM851 648h3v1h-3zM855 648h5v1h-5zM861 648h1v1h-1zM863 648h1v1h-1zM865 648h6v1h-6zM872 648h1v1h-1zM874 648h1v1h-1zM878 648h1v1h-1zM883 648h6v1h-6zM891 648h2v1h-2zM896 648h1v1h-1zM898 648h7v1h-7zM906 648h2v1h-2zM910 648h1v1h-1zM912 648h1v1h-1zM914 648h1v1h-1zM918 648h3v1h-3zM924 648h1v1h-1zM926 648h2v1h-2zM932 648h7v1h-7zM940 648h1v1h-1zM943 648h1v1h-1zM945 648h1v1h-1zM947 648h2v1h-2zM950 648h2v1h-2zM954 648h2v1h-2zM957 648h1v1h-1zM959 648h1v1h-1zM962 648h3v1h-3zM972 648h1v1h-1zM668 649h1v1h-1zM672 649h1v1h-1zM676 649h1v1h-1zM682 649h1v1h-1zM684 649h1v1h-1zM687 649h5v1h-5zM694 649h10v1h-10zM705 649h9v1h-9zM715 649h26v1h-26zM742 649h64v1h-64zM807 649h6v1h-6zM814 649h4v1h-4zM819 649h1v1h-1zM823 649h3v1h-3zM827 649h6v1h-6zM835 649h4v1h-4zM840 649h2v1h-2zM844 649h6v1h-6zM851 649h1v1h-1zM854 649h3v1h-3zM858 649h3v1h-3zM862 649h7v1h-7zM870 649h1v1h-1zM872 649h2v1h-2zM876 649h4v1h-4zM881 649h1v1h-1zM885 649h1v1h-1zM887 649h2v1h-2zM891 649h1v1h-1zM893 649h2v1h-2zM896 649h5v1h-5zM903 649h1v1h-1zM905 649h1v1h-1zM908 649h1v1h-1zM912 649h3v1h-3zM916 649h1v1h-1zM918 649h1v1h-1zM920 649h1v1h-1zM922 649h1v1h-1zM926 649h1v1h-1zM928 649h1v1h-1zM930 649h2v1h-2zM935 649h4v1h-4zM945 649h1v1h-1zM948 649h1v1h-1zM950 649h1v1h-1zM952 649h3v1h-3zM957 649h1v1h-1zM960 649h2v1h-2zM670 650h1v1h-1zM673 650h1v1h-1zM678 650h2v1h-2zM682 650h1v1h-1zM685 650h1v1h-1zM687 650h1v1h-1zM689 650h1v1h-1zM692 650h1v1h-1zM694 650h1v1h-1zM696 650h31v1h-31zM729 650h41v1h-41zM771 650h10v1h-10zM782 650h4v1h-4zM787 650h6v1h-6zM794 650h6v1h-6zM804 650h10v1h-10zM815 650h4v1h-4zM820 650h6v1h-6zM827 650h1v1h-1zM829 650h3v1h-3zM833 650h8v1h-8zM842 650h7v1h-7zM850 650h1v1h-1zM852 650h2v1h-2zM861 650h3v1h-3zM866 650h4v1h-4zM872 650h3v1h-3zM876 650h1v1h-1zM878 650h1v1h-1zM880 650h2v1h-2zM883 650h3v1h-3zM889 650h4v1h-4zM895 650h1v1h-1zM897 650h2v1h-2zM900 650h2v1h-2zM903 650h1v1h-1zM906 650h4v1h-4zM912 650h4v1h-4zM917 650h1v1h-1zM920 650h1v1h-1zM930 650h3v1h-3zM934 650h6v1h-6zM943 650h1v1h-1zM946 650h1v1h-1zM952 650h1v1h-1zM955 650h2v1h-2zM958 650h1v1h-1zM961 650h1v1h-1zM969 650h1v1h-1zM668 651h1v1h-1zM671 651h1v1h-1zM676 651h1v1h-1zM678 651h5v1h-5zM684 651h6v1h-6zM691 651h5v1h-5zM697 651h5v1h-5zM703 651h3v1h-3zM707 651h2v1h-2zM711 651h3v1h-3zM715 651h2v1h-2zM718 651h26v1h-26zM745 651h4v1h-4zM750 651h18v1h-18zM769 651h10v1h-10zM780 651h10v1h-10zM791 651h9v1h-9zM801 651h2v1h-2zM804 651h7v1h-7zM812 651h1v1h-1zM814 651h10v1h-10zM825 651h3v1h-3zM829 651h5v1h-5zM836 651h1v1h-1zM838 651h1v1h-1zM840 651h4v1h-4zM846 651h2v1h-2zM850 651h7v1h-7zM858 651h8v1h-8zM867 651h4v1h-4zM874 651h1v1h-1zM880 651h1v1h-1zM883 651h2v1h-2zM886 651h2v1h-2zM889 651h1v1h-1zM891 651h1v1h-1zM893 651h2v1h-2zM896 651h3v1h-3zM900 651h1v1h-1zM903 651h1v1h-1zM905 651h1v1h-1zM907 651h3v1h-3zM912 651h2v1h-2zM915 651h2v1h-2zM919 651h1v1h-1zM923 651h1v1h-1zM930 651h1v1h-1zM935 651h1v1h-1zM937 651h1v1h-1zM939 651h1v1h-1zM945 651h1v1h-1zM957 651h1v1h-1zM673 652h1v1h-1zM677 652h1v1h-1zM679 652h1v1h-1zM683 652h1v1h-1zM685 652h3v1h-3zM690 652h2v1h-2zM694 652h5v1h-5zM700 652h20v1h-20zM721 652h9v1h-9zM731 652h6v1h-6zM739 652h31v1h-31zM771 652h12v1h-12zM784 652h2v1h-2zM787 652h5v1h-5zM793 652h5v1h-5zM800 652h1v1h-1zM802 652h2v1h-2zM806 652h5v1h-5zM816 652h4v1h-4zM821 652h5v1h-5zM827 652h6v1h-6zM835 652h2v1h-2zM838 652h5v1h-5zM844 652h2v1h-2zM848 652h5v1h-5zM854 652h1v1h-1zM856 652h1v1h-1zM858 652h3v1h-3zM863 652h2v1h-2zM866 652h3v1h-3zM876 652h4v1h-4zM884 652h2v1h-2zM887 652h2v1h-2zM891 652h4v1h-4zM898 652h2v1h-2zM906 652h4v1h-4zM914 652h1v1h-1zM916 652h1v1h-1zM921 652h1v1h-1zM934 652h5v1h-5zM949 652h2v1h-2zM961 652h1v1h-1zM672 653h1v1h-1zM674 653h1v1h-1zM679 653h1v1h-1zM681 653h1v1h-1zM686 653h1v1h-1zM688 653h1v1h-1zM691 653h2v1h-2zM694 653h1v1h-1zM698 653h2v1h-2zM701 653h35v1h-35zM737 653h15v1h-15zM753 653h33v1h-33zM787 653h6v1h-6zM794 653h2v1h-2zM797 653h13v1h-13zM813 653h5v1h-5zM819 653h1v1h-1zM821 653h6v1h-6zM828 653h2v1h-2zM832 653h1v1h-1zM834 653h1v1h-1zM836 653h4v1h-4zM841 653h1v1h-1zM843 653h3v1h-3zM847 653h6v1h-6zM854 653h1v1h-1zM856 653h1v1h-1zM858 653h1v1h-1zM860 653h2v1h-2zM863 653h4v1h-4zM868 653h2v1h-2zM871 653h3v1h-3zM878 653h2v1h-2zM882 653h3v1h-3zM887 653h1v1h-1zM892 653h1v1h-1zM897 653h2v1h-2zM902 653h1v1h-1zM904 653h1v1h-1zM907 653h1v1h-1zM915 653h1v1h-1zM919 653h1v1h-1zM924 653h1v1h-1zM939 653h1v1h-1zM685 654h1v1h-1zM687 654h1v1h-1zM689 654h2v1h-2zM693 654h1v1h-1zM695 654h3v1h-3zM699 654h4v1h-4zM705 654h1v1h-1zM707 654h2v1h-2zM710 654h4v1h-4zM715 654h35v1h-35zM751 654h2v1h-2zM754 654h4v1h-4zM759 654h28v1h-28zM788 654h9v1h-9zM798 654h5v1h-5zM804 654h2v1h-2zM809 654h3v1h-3zM814 654h1v1h-1zM816 654h2v1h-2zM819 654h2v1h-2zM822 654h8v1h-8zM831 654h1v1h-1zM835 654h1v1h-1zM837 654h2v1h-2zM840 654h3v1h-3zM844 654h2v1h-2zM847 654h2v1h-2zM851 654h2v1h-2zM855 654h1v1h-1zM857 654h2v1h-2zM860 654h2v1h-2zM863 654h1v1h-1zM866 654h2v1h-2zM870 654h1v1h-1zM873 654h2v1h-2zM877 654h3v1h-3zM881 654h1v1h-1zM884 654h3v1h-3zM888 654h1v1h-1zM890 654h1v1h-1zM893 654h1v1h-1zM895 654h2v1h-2zM898 654h1v1h-1zM901 654h2v1h-2zM904 654h2v1h-2zM912 654h1v1h-1zM916 654h1v1h-1zM918 654h2v1h-2zM922 654h1v1h-1zM932 654h1v1h-1zM940 654h1v1h-1zM678 655h1v1h-1zM684 655h2v1h-2zM688 655h2v1h-2zM691 655h3v1h-3zM695 655h2v1h-2zM698 655h3v1h-3zM702 655h2v1h-2zM705 655h7v1h-7zM713 655h4v1h-4zM718 655h10v1h-10zM729 655h11v1h-11zM741 655h10v1h-10zM752 655h29v1h-29zM782 655h6v1h-6zM789 655h3v1h-3zM795 655h2v1h-2zM798 655h2v1h-2zM801 655h4v1h-4zM807 655h7v1h-7zM815 655h2v1h-2zM818 655h1v1h-1zM820 655h4v1h-4zM825 655h3v1h-3zM830 655h2v1h-2zM833 655h1v1h-1zM836 655h1v1h-1zM839 655h3v1h-3zM843 655h1v1h-1zM847 655h3v1h-3zM852 655h2v1h-2zM860 655h2v1h-2zM864 655h2v1h-2zM867 655h2v1h-2zM872 655h2v1h-2zM875 655h1v1h-1zM878 655h1v1h-1zM884 655h2v1h-2zM887 655h1v1h-1zM893 655h1v1h-1zM895 655h1v1h-1zM901 655h1v1h-1zM905 655h1v1h-1zM907 655h1v1h-1zM920 655h1v1h-1zM941 655h1v1h-1zM685 656h1v1h-1zM690 656h2v1h-2zM693 656h1v1h-1zM696 656h1v1h-1zM698 656h2v1h-2zM701 656h2v1h-2zM704 656h6v1h-6zM711 656h4v1h-4zM716 656h4v1h-4zM723 656h1v1h-1zM725 656h10v1h-10zM736 656h3v1h-3zM740 656h7v1h-7zM748 656h4v1h-4zM753 656h1v1h-1zM755 656h3v1h-3zM759 656h24v1h-24zM784 656h5v1h-5zM794 656h3v1h-3zM798 656h1v1h-1zM800 656h1v1h-1zM803 656h4v1h-4zM809 656h7v1h-7zM817 656h1v1h-1zM819 656h1v1h-1zM822 656h1v1h-1zM824 656h3v1h-3zM829 656h3v1h-3zM834 656h4v1h-4zM839 656h2v1h-2zM843 656h3v1h-3zM847 656h1v1h-1zM849 656h6v1h-6zM859 656h1v1h-1zM861 656h2v1h-2zM867 656h1v1h-1zM869 656h1v1h-1zM874 656h1v1h-1zM878 656h1v1h-1zM880 656h1v1h-1zM884 656h2v1h-2zM887 656h2v1h-2zM892 656h3v1h-3zM905 656h1v1h-1zM911 656h1v1h-1zM913 656h1v1h-1zM686 657h1v1h-1zM688 657h3v1h-3zM697 657h5v1h-5zM704 657h1v1h-1zM706 657h3v1h-3zM710 657h1v1h-1zM712 657h6v1h-6zM719 657h3v1h-3zM723 657h1v1h-1zM725 657h2v1h-2zM729 657h10v1h-10zM740 657h5v1h-5zM746 657h10v1h-10zM759 657h2v1h-2zM762 657h5v1h-5zM768 657h3v1h-3zM773 657h3v1h-3zM778 657h1v1h-1zM781 657h7v1h-7zM789 657h7v1h-7zM798 657h3v1h-3zM802 657h2v1h-2zM806 657h1v1h-1zM809 657h2v1h-2zM812 657h3v1h-3zM817 657h7v1h-7zM828 657h3v1h-3zM832 657h2v1h-2zM836 657h2v1h-2zM839 657h1v1h-1zM841 657h2v1h-2zM844 657h1v1h-1zM846 657h1v1h-1zM848 657h1v1h-1zM850 657h2v1h-2zM856 657h1v1h-1zM860 657h2v1h-2zM864 657h2v1h-2zM867 657h2v1h-2zM870 657h1v1h-1zM879 657h1v1h-1zM885 657h1v1h-1zM887 657h1v1h-1zM889 657h1v1h-1zM894 657h1v1h-1zM896 657h1v1h-1zM902 657h2v1h-2zM908 657h1v1h-1zM912 657h1v1h-1zM916 657h1v1h-1zM682 658h1v1h-1zM684 658h1v1h-1zM689 658h3v1h-3zM693 658h1v1h-1zM696 658h1v1h-1zM700 658h2v1h-2zM703 658h2v1h-2zM707 658h5v1h-5zM714 658h2v1h-2zM718 658h2v1h-2zM722 658h1v1h-1zM725 658h1v1h-1zM727 658h14v1h-14zM742 658h6v1h-6zM749 658h2v1h-2zM754 658h5v1h-5zM760 658h7v1h-7zM768 658h3v1h-3zM772 658h3v1h-3zM776 658h2v1h-2zM779 658h1v1h-1zM781 658h1v1h-1zM783 658h2v1h-2zM787 658h1v1h-1zM789 658h4v1h-4zM794 658h2v1h-2zM800 658h1v1h-1zM802 658h3v1h-3zM807 658h2v1h-2zM810 658h1v1h-1zM813 658h4v1h-4zM818 658h1v1h-1zM820 658h2v1h-2zM825 658h1v1h-1zM830 658h4v1h-4zM837 658h3v1h-3zM841 658h1v1h-1zM844 658h3v1h-3zM848 658h1v1h-1zM851 658h1v1h-1zM856 658h1v1h-1zM858 658h1v1h-1zM860 658h1v1h-1zM862 658h1v1h-1zM865 658h4v1h-4zM872 658h7v1h-7zM881 658h1v1h-1zM688 659h1v1h-1zM692 659h2v1h-2zM695 659h2v1h-2zM700 659h1v1h-1zM704 659h3v1h-3zM708 659h1v1h-1zM712 659h4v1h-4zM717 659h4v1h-4zM724 659h1v1h-1zM726 659h1v1h-1zM728 659h3v1h-3zM732 659h3v1h-3zM737 659h1v1h-1zM740 659h4v1h-4zM745 659h5v1h-5zM752 659h4v1h-4zM758 659h6v1h-6zM765 659h1v1h-1zM768 659h1v1h-1zM770 659h4v1h-4zM775 659h3v1h-3zM779 659h4v1h-4zM784 659h1v1h-1zM786 659h1v1h-1zM789 659h1v1h-1zM792 659h3v1h-3zM796 659h1v1h-1zM798 659h4v1h-4zM806 659h1v1h-1zM808 659h2v1h-2zM811 659h5v1h-5zM817 659h3v1h-3zM821 659h4v1h-4zM826 659h2v1h-2zM829 659h1v1h-1zM831 659h1v1h-1zM834 659h1v1h-1zM836 659h1v1h-1zM838 659h2v1h-2zM841 659h2v1h-2zM844 659h2v1h-2zM847 659h1v1h-1zM850 659h3v1h-3zM857 659h1v1h-1zM859 659h4v1h-4zM864 659h1v1h-1zM866 659h1v1h-1zM869 659h1v1h-1zM871 659h1v1h-1zM874 659h1v1h-1zM885 659h1v1h-1zM888 659h1v1h-1zM891 659h1v1h-1zM898 659h1v1h-1zM900 659h1v1h-1zM688 660h2v1h-2zM697 660h1v1h-1zM700 660h1v1h-1zM702 660h2v1h-2zM706 660h1v1h-1zM710 660h2v1h-2zM713 660h2v1h-2zM717 660h1v1h-1zM721 660h2v1h-2zM726 660h1v1h-1zM729 660h2v1h-2zM732 660h7v1h-7zM741 660h2v1h-2zM745 660h1v1h-1zM748 660h4v1h-4zM753 660h2v1h-2zM756 660h10v1h-10zM767 660h3v1h-3zM772 660h10v1h-10zM783 660h1v1h-1zM785 660h4v1h-4zM790 660h1v1h-1zM794 660h2v1h-2zM797 660h3v1h-3zM803 660h5v1h-5zM810 660h3v1h-3zM814 660h1v1h-1zM816 660h1v1h-1zM819 660h3v1h-3zM823 660h1v1h-1zM825 660h1v1h-1zM828 660h1v1h-1zM830 660h1v1h-1zM833 660h1v1h-1zM837 660h1v1h-1zM847 660h1v1h-1zM849 660h2v1h-2zM853 660h1v1h-1zM855 660h4v1h-4zM866 660h1v1h-1zM868 660h1v1h-1zM870 660h1v1h-1zM882 660h1v1h-1zM886 660h1v1h-1zM895 660h1v1h-1zM687 661h1v1h-1zM691 661h1v1h-1zM693 661h1v1h-1zM695 661h2v1h-2zM700 661h2v1h-2zM704 661h1v1h-1zM706 661h2v1h-2zM709 661h1v1h-1zM711 661h2v1h-2zM715 661h1v1h-1zM720 661h1v1h-1zM722 661h2v1h-2zM725 661h1v1h-1zM728 661h2v1h-2zM731 661h3v1h-3zM735 661h1v1h-1zM738 661h3v1h-3zM744 661h3v1h-3zM751 661h1v1h-1zM754 661h3v1h-3zM759 661h1v1h-1zM761 661h2v1h-2zM764 661h3v1h-3zM770 661h4v1h-4zM775 661h1v1h-1zM777 661h3v1h-3zM784 661h1v1h-1zM788 661h5v1h-5zM794 661h6v1h-6zM803 661h1v1h-1zM806 661h5v1h-5zM812 661h2v1h-2zM818 661h1v1h-1zM820 661h1v1h-1zM822 661h1v1h-1zM824 661h2v1h-2zM827 661h2v1h-2zM831 661h1v1h-1zM835 661h1v1h-1zM839 661h2v1h-2zM844 661h2v1h-2zM851 661h1v1h-1zM854 661h1v1h-1zM862 661h1v1h-1zM864 661h1v1h-1zM878 661h1v1h-1zM883 661h1v1h-1zM694 662h4v1h-4zM701 662h3v1h-3zM705 662h2v1h-2zM710 662h1v1h-1zM715 662h3v1h-3zM720 662h1v1h-1zM723 662h3v1h-3zM727 662h2v1h-2zM730 662h8v1h-8zM741 662h2v1h-2zM744 662h7v1h-7zM758 662h2v1h-2zM767 662h2v1h-2zM770 662h2v1h-2zM773 662h2v1h-2zM779 662h1v1h-1zM781 662h11v1h-11zM794 662h4v1h-4zM801 662h5v1h-5zM808 662h3v1h-3zM814 662h1v1h-1zM816 662h1v1h-1zM818 662h2v1h-2zM822 662h1v1h-1zM825 662h1v1h-1zM839 662h1v1h-1zM843 662h1v1h-1zM846 662h1v1h-1zM848 662h3v1h-3zM853 662h1v1h-1zM868 662h1v1h-1zM698 663h2v1h-2zM704 663h2v1h-2zM716 663h1v1h-1zM720 663h3v1h-3zM726 663h2v1h-2zM730 663h4v1h-4zM735 663h1v1h-1zM737 663h3v1h-3zM742 663h1v1h-1zM747 663h5v1h-5zM754 663h1v1h-1zM758 663h1v1h-1zM761 663h2v1h-2zM764 663h1v1h-1zM766 663h2v1h-2zM771 663h1v1h-1zM775 663h2v1h-2zM779 663h1v1h-1zM782 663h2v1h-2zM785 663h2v1h-2zM791 663h1v1h-1zM793 663h3v1h-3zM797 663h1v1h-1zM799 663h1v1h-1zM801 663h1v1h-1zM804 663h3v1h-3zM808 663h2v1h-2zM811 663h2v1h-2zM817 663h4v1h-4zM826 663h3v1h-3zM834 663h1v1h-1zM836 663h1v1h-1zM841 663h1v1h-1zM845 663h4v1h-4zM853 663h1v1h-1zM855 663h1v1h-1zM857 663h1v1h-1zM860 663h1v1h-1zM700 664h1v1h-1zM706 664h1v1h-1zM712 664h1v1h-1zM718 664h1v1h-1zM720 664h2v1h-2zM727 664h3v1h-3zM732 664h1v1h-1zM736 664h2v1h-2zM739 664h2v1h-2zM743 664h3v1h-3zM748 664h1v1h-1zM752 664h1v1h-1zM754 664h3v1h-3zM759 664h2v1h-2zM762 664h1v1h-1zM766 664h1v1h-1zM770 664h2v1h-2zM773 664h1v1h-1zM775 664h2v1h-2zM780 664h4v1h-4zM785 664h1v1h-1zM789 664h1v1h-1zM791 664h1v1h-1zM793 664h3v1h-3zM797 664h1v1h-1zM806 664h2v1h-2zM810 664h2v1h-2zM818 664h2v1h-2zM822 664h2v1h-2zM834 664h1v1h-1zM836 664h1v1h-1zM841 664h2v1h-2zM851 664h1v1h-1zM855 664h1v1h-1zM699 665h1v1h-1zM701 665h2v1h-2zM709 665h1v1h-1zM718 665h2v1h-2zM722 665h1v1h-1zM725 665h3v1h-3zM730 665h2v1h-2zM737 665h1v1h-1zM740 665h2v1h-2zM743 665h3v1h-3zM747 665h2v1h-2zM751 665h1v1h-1zM757 665h5v1h-5zM764 665h4v1h-4zM771 665h2v1h-2zM774 665h1v1h-1zM778 665h1v1h-1zM780 665h2v1h-2zM784 665h2v1h-2zM788 665h3v1h-3zM792 665h1v1h-1zM795 665h4v1h-4zM803 665h1v1h-1zM806 665h1v1h-1zM808 665h1v1h-1zM813 665h2v1h-2zM818 665h1v1h-1zM824 665h1v1h-1zM827 665h1v1h-1zM829 665h1v1h-1zM831 665h1v1h-1zM834 665h1v1h-1zM845 665h1v1h-1zM700 666h1v1h-1zM710 666h1v1h-1zM716 666h1v1h-1zM720 666h1v1h-1zM728 666h2v1h-2zM731 666h1v1h-1zM733 666h1v1h-1zM736 666h3v1h-3zM740 666h1v1h-1zM743 666h3v1h-3zM752 666h2v1h-2zM755 666h2v1h-2zM759 666h1v1h-1zM761 666h1v1h-1zM766 666h2v1h-2zM770 666h3v1h-3zM776 666h1v1h-1zM779 666h3v1h-3zM788 666h1v1h-1zM792 666h1v1h-1zM794 666h1v1h-1zM803 666h1v1h-1zM806 666h1v1h-1zM808 666h1v1h-1zM815 666h1v1h-1zM819 666h1v1h-1zM821 666h1v1h-1zM826 666h2v1h-2zM830 666h1v1h-1zM834 666h1v1h-1zM843 666h1v1h-1zM854 666h1v1h-1zM856 666h1v1h-1zM716 667h2v1h-2zM719 667h1v1h-1zM722 667h1v1h-1zM727 667h1v1h-1zM730 667h1v1h-1zM732 667h1v1h-1zM737 667h1v1h-1zM739 667h1v1h-1zM743 667h1v1h-1zM749 667h2v1h-2zM756 667h1v1h-1zM758 667h1v1h-1zM760 667h1v1h-1zM765 667h2v1h-2zM768 667h1v1h-1zM777 667h2v1h-2zM780 667h1v1h-1zM783 667h1v1h-1zM785 667h1v1h-1zM789 667h3v1h-3zM803 667h1v1h-1zM806 667h3v1h-3zM812 667h1v1h-1zM819 667h1v1h-1zM855 667h1v1h-1zM722 668h1v1h-1zM726 668h2v1h-2zM729 668h1v1h-1zM733 668h1v1h-1zM736 668h1v1h-1zM739 668h1v1h-1zM741 668h1v1h-1zM753 668h2v1h-2zM757 668h1v1h-1zM762 668h1v1h-1zM765 668h1v1h-1zM768 668h1v1h-1zM773 668h1v1h-1zM777 668h2v1h-2zM780 668h1v1h-1zM784 668h1v1h-1zM789 668h2v1h-2zM792 668h1v1h-1zM796 668h1v1h-1zM799 668h1v1h-1zM802 668h1v1h-1zM805 668h1v1h-1zM807 668h1v1h-1zM813 668h1v1h-1zM825 668h1v1h-1zM830 668h2v1h-2zM835 668h1v1h-1zM837 668h1v1h-1zM839 668h1v1h-1zM841 668h1v1h-1zM724 669h1v1h-1zM727 669h2v1h-2zM731 669h1v1h-1zM737 669h1v1h-1zM745 669h1v1h-1zM756 669h1v1h-1zM768 669h1v1h-1zM779 669h2v1h-2zM784 669h2v1h-2zM790 669h2v1h-2zM799 669h1v1h-1zM805 669h1v1h-1zM811 669h1v1h-1zM813 669h1v1h-1zM815 669h1v1h-1zM817 669h1v1h-1zM819 669h1v1h-1zM825 669h1v1h-1zM833 669h1v1h-1zM835 669h1v1h-1zM838 669h1v1h-1zM725 670h1v1h-1zM732 670h1v1h-1zM736 670h1v1h-1zM744 670h1v1h-1zM753 670h2v1h-2zM762 670h1v1h-1zM768 670h1v1h-1zM778 670h1v1h-1zM784 670h1v1h-1zM789 670h1v1h-1zM793 670h1v1h-1zM806 670h1v1h-1zM809 670h1v1h-1zM823 670h1v1h-1zM749 671h1v1h-1zM765 671h1v1h-1zM771 671h1v1h-1zM773 671h1v1h-1zM777 671h1v1h-1zM780 671h1v1h-1zM792 671h2v1h-2zM795 671h1v1h-1zM804 671h1v1h-1zM806 671h1v1h-1zM754 672h1v1h-1zM770 672h1v1h-1zM773 672h1v1h-1zM779 672h1v1h-1zM784 672h1v1h-1zM789 672h1v1h-1zM793 672h1v1h-1zM799 672h1v1h-1zM772 673h2v1h-2zM774 674h1v1h-1z"/></svg></body></html>
